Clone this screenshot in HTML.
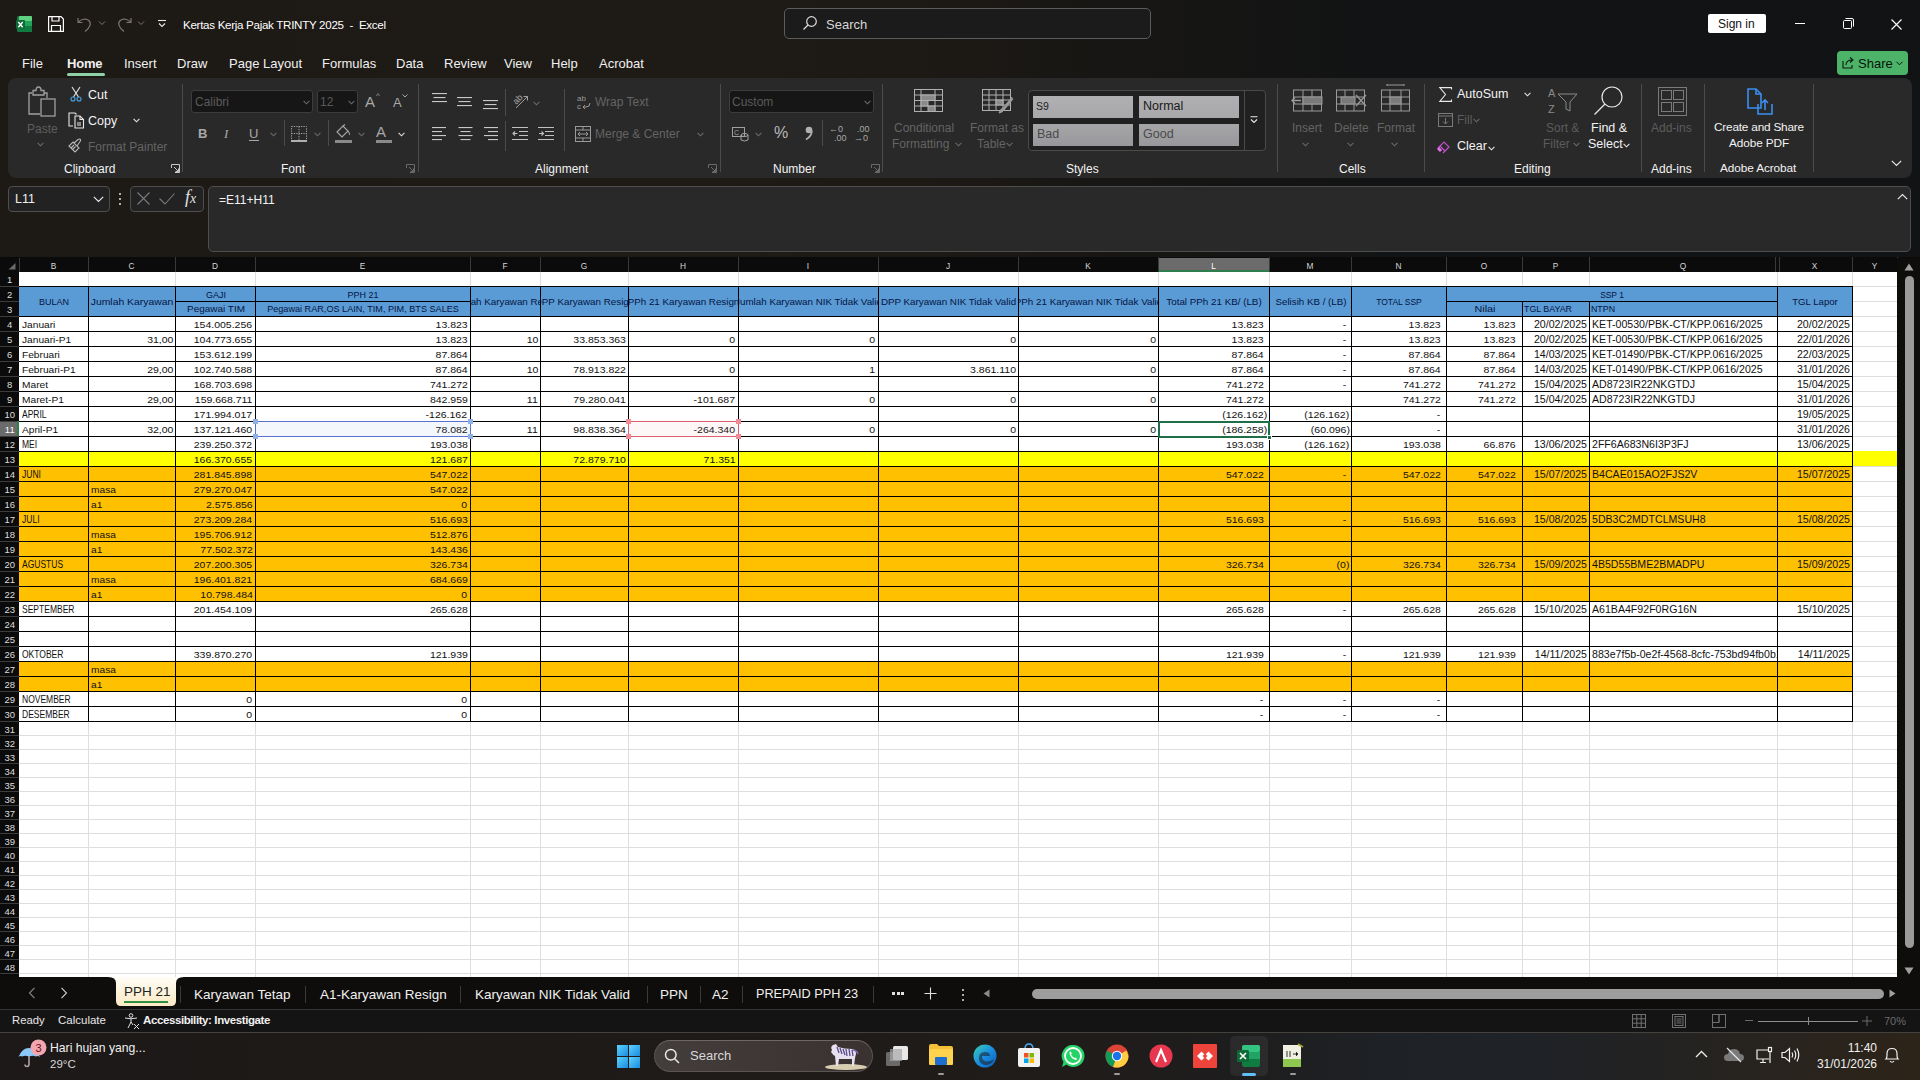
<!DOCTYPE html><html><head><meta charset="utf-8"><title>Excel</title><style>
*{margin:0;padding:0;box-sizing:border-box}
html,body{width:1920px;height:1080px;overflow:hidden;background:#181513;font-family:"Liberation Sans",sans-serif}
div,span,svg{position:absolute}
.t{white-space:nowrap;line-height:1;color:#ffffff;font-size:13px}
.g{color:#8a8a8a}
.lbl{white-space:nowrap;line-height:1;color:#f3f3f3;font-size:12px}
.sep{background:#4a4a4a;width:1px}
svg{overflow:visible}
.c{white-space:nowrap;line-height:1;font-size:10.3px;color:#111;overflow:hidden}
.ch{white-space:nowrap;line-height:1;font-size:8.3px;color:#dcdcdc;text-align:center}
.rh{white-space:nowrap;line-height:1;font-size:9.5px;color:#e6e6e6;text-align:right}
</style></head><body>

<div style="left:0px;top:0px;width:1920px;height:257px;background:linear-gradient(90deg,#1d1915 0%,#1e1a16 35%,#1d1915 48%,#171614 58%,#121314 72%,#111315 100%)"></div>
<svg style="left:16px;top:16px" width="16" height="16" viewBox="0 0 16 16">
<rect x="1" y="0" width="15" height="16" rx="1.5" fill="#1a7a43"/>
<rect x="3" y="0" width="13" height="5" rx="1" fill="#5fd07f"/>
<rect x="3" y="5" width="13" height="5" fill="#21a358"/>
<rect x="3" y="10" width="13" height="6" fill="#107c41"/>
<rect x="0" y="4" width="9" height="9" rx="1" fill="#0e6a37"/>
<path d="M2.3 6 L6.7 11.3 M6.7 6 L2.3 11.3" stroke="#fff" stroke-width="1.4"/>
</svg>
<svg style="left:48px;top:16px" width="16" height="16" viewBox="0 0 16 16" fill="none" stroke="#ffffff" stroke-width="1.2">
<path d="M0.6 0.6 H13 L15.4 3 V15.4 H0.6 Z"/><path d="M4 0.6 V5 H11 V0.6"/><path d="M3.5 15.4 V9.5 H12.5 V15.4"/>
</svg>
<svg style="left:77px;top:16px" width="16" height="16" viewBox="0 0 16 16" fill="none" stroke="#7c7670" stroke-width="1.2">
<path d="M1 2 V6.5 H5.5"/><path d="M1.3 6.3 C3.5 3 9 2 11.8 4.5 C14.5 7 13.5 11.5 8 15.5"/></svg>
<svg style="left:98px;top:20px" width="8" height="6" viewBox="0 0 8 6" fill="none" stroke="#7c7670" stroke-width="1"><path d="M1 1.5 L4 4.5 L7 1.5"/></svg>
<svg style="left:116px;top:16px" width="16" height="16" viewBox="0 0 16 16" fill="none" stroke="#7c7670" stroke-width="1.2">
<path d="M15 2 V6.5 H10.5"/><path d="M14.7 6.3 C12.5 3 7 2 4.2 4.5 C1.5 7 2.5 11.5 8 15.5"/></svg>
<svg style="left:137px;top:20px" width="8" height="6" viewBox="0 0 8 6" fill="none" stroke="#7c7670" stroke-width="1"><path d="M1 1.5 L4 4.5 L7 1.5"/></svg>
<svg style="left:157px;top:19px" width="10" height="10" viewBox="0 0 10 10" fill="none" stroke="#e8e8e8" stroke-width="1.1"><path d="M1 1.5 H9"/><path d="M2 4.5 L5 7.5 L8 4.5"/></svg>
<div class="t" style="left:183px;top:19px;font-size:11.6px;color:#fff;letter-spacing:-0.3px">Kertas Kerja Pajak TRINTY 2025&nbsp; - &nbsp;Excel</div>
<div style="left:784px;top:8px;width:367px;height:31px;background:#1b1b1b;border:1px solid #5c5c5c;border-radius:5px"></div>
<svg style="left:802px;top:15px" width="16" height="16" viewBox="0 0 16 16" fill="none" stroke="#dcdcdc" stroke-width="1.2"><circle cx="9.5" cy="6.5" r="4.8"/><path d="M6 10 L1.5 14.5"/></svg>
<div class="t" style="left:826px;top:18px;font-size:13px;color:#d6d6d6">Search</div>
<div style="left:1708px;top:14px;width:58px;height:19px;background:#fff;border-radius:2px"></div>
<div class="t" style="left:1718px;top:18px;font-size:12px;color:#111">Sign in</div>
<div style="left:1795px;top:23px;width:10px;height:1px;background:#fff"></div>
<svg style="left:1843px;top:18px" width="11" height="11" viewBox="0 0 11 11" fill="none" stroke="#fff" stroke-width="1"><rect x="0.5" y="2.5" width="8" height="8" rx="1"/><path d="M2.5 0.5 H9 Q10.5 0.5 10.5 2 V8.5"/></svg>
<svg style="left:1891px;top:19px" width="11" height="11" viewBox="0 0 11 11" fill="none" stroke="#fff" stroke-width="1.1"><path d="M0.5 0.5 L10.5 10.5 M10.5 0.5 L0.5 10.5"/></svg>
<div class="t" style="left:22px;top:57px;font-size:13px;color:#f0f0f0">File</div>
<div class="t" style="left:67px;top:57px;font-size:13px;color:#f0f0f0;font-weight:bold;letter-spacing:-0.2px">Home</div>
<div class="t" style="left:124px;top:57px;font-size:13px;color:#f0f0f0">Insert</div>
<div class="t" style="left:177px;top:57px;font-size:13px;color:#f0f0f0">Draw</div>
<div class="t" style="left:229px;top:57px;font-size:13px;color:#f0f0f0">Page Layout</div>
<div class="t" style="left:322px;top:57px;font-size:13px;color:#f0f0f0">Formulas</div>
<div class="t" style="left:396px;top:57px;font-size:13px;color:#f0f0f0">Data</div>
<div class="t" style="left:444px;top:57px;font-size:13px;color:#f0f0f0">Review</div>
<div class="t" style="left:504px;top:57px;font-size:13px;color:#f0f0f0">View</div>
<div class="t" style="left:551px;top:57px;font-size:13px;color:#f0f0f0">Help</div>
<div class="t" style="left:599px;top:57px;font-size:13px;color:#f0f0f0">Acrobat</div>
<div style="left:67px;top:73px;width:38px;height:3px;background:#8fd1a6;border-radius:2px"></div>
<div style="left:1837px;top:51px;width:71px;height:24px;background:#4cb368;border-radius:4px"></div>
<svg style="left:1842px;top:56px" width="13" height="13" viewBox="0 0 13 13" fill="none" stroke="#0a1a0e" stroke-width="1.1"><path d="M1 5 V12 H10 V9"/><path d="M4 9 C4 5.5 6.5 4 10 4 M8 1.5 L11 4 L8 6.5"/></svg>
<div class="t" style="left:1858px;top:57px;font-size:13px;color:#06140a">Share</div>
<svg style="left:1896px;top:61px" width="7" height="5" viewBox="0 0 7 5" fill="none" stroke="#06140a" stroke-width="1"><path d="M0.5 0.8 L3.5 3.8 L6.5 0.8"/></svg>
<div style="left:8px;top:78px;width:1904px;height:100px;background:#292929;border-radius:8px"></div>
<svg style="left:28px;top:86px" width="30" height="32" viewBox="0 0 30 32" fill="none" stroke="#a0a0a0" stroke-width="1.3">
<path d="M4 7 H1 V28 H12"/><path d="M16 7 H19 V12"/><path d="M5 4.5 H8 Q8 1 10.5 1 Q13 1 13 4.5 H16 V9 H5 Z"/><rect x="13" y="13" width="14" height="17"/></svg>
<div class="t" style="left:27px;top:123px;font-size:12px;color:#5e5e5e">Paste</div>
<svg style="left:37px;top:142px" width="7" height="5" viewBox="0 0 7 5" fill="none" stroke="#6a6a6a" stroke-width="1.1"><path d="M0.6 0.8 L3.5 3.8 L6.4 0.8"/></svg>
<svg style="left:70px;top:86px" width="12" height="16" viewBox="0 0 12 16" fill="none" stroke-width="1.1">
<path d="M2 1 L8.5 11 M10 1 L3.5 11" stroke="#e8e8e8"/><circle cx="3" cy="13" r="2" stroke="#4aa3e8"/><circle cx="9" cy="13" r="2" stroke="#4aa3e8"/></svg>
<div class="t" style="left:88px;top:89px;font-size:12.5px;color:#f3f3f3">Cut</div>
<svg style="left:68px;top:112px" width="17" height="17" viewBox="0 0 17 17" fill="none" stroke="#e8e8e8" stroke-width="1.1">
<path d="M5 14 H1 V1 H7 L8.5 2.5"/><path d="M7 4 H12 L15.5 7.5 V16 H7 Z"/><path d="M12 4 V7.5 H15.5"/><path d="M9 11 H13 M9 13 H13"/></svg>
<div class="t" style="left:88px;top:115px;font-size:12.5px;color:#f3f3f3">Copy</div>
<svg style="left:133px;top:118px" width="7" height="5" viewBox="0 0 7 5" fill="none" stroke="#e8e8e8" stroke-width="1.1"><path d="M0.6 0.8 L3.5 3.8 L6.4 0.8"/></svg>
<svg style="left:68px;top:138px" width="17" height="16" viewBox="0 0 17 16" fill="none" stroke="#b8b8b8" stroke-width="1.1">
<path d="M1 8 L7 14 L11 10 L5 4 Z"/><path d="M6 5 L10 1.5 Q11.5 0.5 12.5 1.5 Q13 2.5 12 3.5 L9 8"/><path d="M3 10 L6 7 M4.5 11.5 L7.5 8.5"/></svg>
<div class="t" style="left:88px;top:141px;font-size:12px;color:#646464">Format Painter</div>
<div class="t" style="left:64px;top:163px;font-size:12px;color:#f3f3f3">Clipboard</div>
<svg style="left:171px;top:164px" width="9" height="9" viewBox="0 0 9 9" fill="none" stroke="#c8c8c8" stroke-width="1"><path d="M0.5 4 V0.5 H8.5 V8.5 H4"/><path d="M3 3 L7.5 7.5 M7.5 4.5 V7.5 H4.5"/></svg>
<div style="left:182px;top:84px;width:1px;height:88px;background:#4b4b4b"></div>
<div style="left:191px;top:90px;width:122px;height:23px;background:#161616;border:1px solid #3c3c3c;border-radius:3px"></div>
<div class="t" style="left:195px;top:96px;font-size:12px;color:#5a5a5a">Calibri</div>
<svg style="left:303px;top:100px" width="7" height="5" viewBox="0 0 7 5" fill="none" stroke="#6a6a6a" stroke-width="1.1"><path d="M0.6 0.8 L3.5 3.8 L6.4 0.8"/></svg>
<div style="left:317px;top:90px;width:41px;height:23px;background:#161616;border:1px solid #3c3c3c;border-radius:3px"></div>
<div class="t" style="left:320px;top:96px;font-size:12px;color:#5a5a5a">12</div>
<svg style="left:348px;top:100px" width="7" height="5" viewBox="0 0 7 5" fill="none" stroke="#6a6a6a" stroke-width="1.1"><path d="M0.6 0.8 L3.5 3.8 L6.4 0.8"/></svg>
<div class="t" style="left:365px;top:94px;font-size:15px;color:#a8a8a8">A</div>
<div class="t" style="left:376px;top:92px;font-size:8px;color:#a8a8a8">^</div>
<div class="t" style="left:393px;top:96px;font-size:13px;color:#a8a8a8">A</div>
<svg style="left:402px;top:94px" width="6" height="4" viewBox="0 0 6 4" fill="none" stroke="#a8a8a8" stroke-width="1"><path d="M0.5 0.5 L3 3 L5.5 0.5"/></svg>
<div class="t" style="left:198px;top:127px;font-size:13px;color:#a8a8a8;font-weight:bold">B</div>
<div class="t" style="left:224px;top:127px;font-size:13px;color:#a8a8a8;font-style:italic;font-family:&quot;Liberation Serif&quot;,serif">I</div>
<div class="t" style="left:249px;top:127px;font-size:13px;color:#a8a8a8">U</div>
<div style="left:249px;top:140px;width:10px;height:1px;background:#a8a8a8"></div>
<svg style="left:270px;top:132px" width="7" height="5" viewBox="0 0 7 5" fill="none" stroke="#6a6a6a" stroke-width="1.1"><path d="M0.6 0.8 L3.5 3.8 L6.4 0.8"/></svg>
<div style="left:284px;top:120px;width:1px;height:26px;background:#4b4b4b"></div>
<svg style="left:291px;top:126px" width="16" height="16" viewBox="0 0 16 16" fill="none" stroke="#a8a8a8" stroke-width="1" stroke-dasharray="1.2 1.2">
<rect x="0.5" y="0.5" width="15" height="14"/><path d="M8 0.5 V14.5 M0.5 7.5 H15.5"/></svg>
<div style="left:291px;top:140px;width:16px;height:1.5px;background:#b0b0b0"></div>
<svg style="left:314px;top:132px" width="7" height="5" viewBox="0 0 7 5" fill="none" stroke="#6a6a6a" stroke-width="1.1"><path d="M0.6 0.8 L3.5 3.8 L6.4 0.8"/></svg>
<div style="left:328px;top:120px;width:1px;height:26px;background:#4b4b4b"></div>
<svg style="left:335px;top:124px" width="17" height="18" viewBox="0 0 17 18" fill="none" stroke="#a8a8a8" stroke-width="1.1">
<path d="M2 8 L8 2 L13 7 L7 13 Z"/><path d="M8 2 L10 0.5 M13 7 Q15 9.5 14.5 11"/></svg>
<div style="left:335px;top:140px;width:17px;height:3px;background:#8a8a8a"></div>
<svg style="left:358px;top:132px" width="7" height="5" viewBox="0 0 7 5" fill="none" stroke="#6a6a6a" stroke-width="1.1"><path d="M0.6 0.8 L3.5 3.8 L6.4 0.8"/></svg>
<div class="t" style="left:376px;top:124px;font-size:15px;color:#a8a8a8">A</div>
<div style="left:376px;top:140px;width:16px;height:3px;background:#8a8a8a"></div>
<svg style="left:398px;top:132px" width="7" height="5" viewBox="0 0 7 5" fill="none" stroke="#e0e0e0" stroke-width="1.1"><path d="M0.6 0.8 L3.5 3.8 L6.4 0.8"/></svg>
<div class="t" style="left:281px;top:163px;font-size:12px;color:#f3f3f3">Font</div>
<svg style="left:406px;top:164px" width="9" height="9" viewBox="0 0 9 9" fill="none" stroke="#6a6a6a" stroke-width="1"><path d="M0.5 4 V0.5 H8.5 V8.5 H4"/><path d="M3 3 L7.5 7.5 M7.5 4.5 V7.5 H4.5"/></svg>
<div style="left:418px;top:84px;width:1px;height:88px;background:#4b4b4b"></div>
<svg style="left:432px;top:93px" width="15" height="12" viewBox="0 0 15 12"><rect x="0.0" y="0" width="15" height="1.1" fill="#c8c8c8"/><rect x="1.5" y="4" width="12" height="1.1" fill="#c8c8c8"/><rect x="0.0" y="8" width="15" height="1.1" fill="#c8c8c8"/></svg>
<svg style="left:457px;top:97px" width="15" height="12" viewBox="0 0 15 12"><rect x="0.0" y="0" width="15" height="1.1" fill="#c8c8c8"/><rect x="1.5" y="4" width="12" height="1.1" fill="#c8c8c8"/><rect x="0.0" y="8" width="15" height="1.1" fill="#c8c8c8"/></svg>
<svg style="left:483px;top:100px" width="15" height="12" viewBox="0 0 15 12"><rect x="0.0" y="0" width="15" height="1.1" fill="#c8c8c8"/><rect x="1.5" y="4" width="12" height="1.1" fill="#c8c8c8"/><rect x="0.0" y="8" width="15" height="1.1" fill="#c8c8c8"/></svg>
<svg style="left:432px;top:127px" width="15" height="16" viewBox="0 0 15 16"><rect x="0" y="0" width="14" height="1.1" fill="#c8c8c8"/><rect x="0" y="4" width="10" height="1.1" fill="#c8c8c8"/><rect x="0" y="8" width="14" height="1.1" fill="#c8c8c8"/><rect x="0" y="12" width="10" height="1.1" fill="#c8c8c8"/></svg>
<svg style="left:458px;top:127px" width="15" height="16" viewBox="0 0 15 16"><rect x="0.5" y="0" width="14" height="1.1" fill="#c8c8c8"/><rect x="2.5" y="4" width="10" height="1.1" fill="#c8c8c8"/><rect x="0.5" y="8" width="14" height="1.1" fill="#c8c8c8"/><rect x="2.5" y="12" width="10" height="1.1" fill="#c8c8c8"/></svg>
<svg style="left:483px;top:127px" width="15" height="16" viewBox="0 0 15 16"><rect x="1" y="0" width="14" height="1.1" fill="#c8c8c8"/><rect x="5" y="4" width="10" height="1.1" fill="#c8c8c8"/><rect x="1" y="8" width="14" height="1.1" fill="#c8c8c8"/><rect x="5" y="12" width="10" height="1.1" fill="#c8c8c8"/></svg>
<div style="left:505px;top:89px;width:1px;height:27px;background:#4b4b4b"></div>
<div style="left:505px;top:121px;width:1px;height:30px;background:#4b4b4b"></div>
<svg style="left:512px;top:92px" width="17" height="18" viewBox="0 0 17 18" fill="none" stroke="#a0a0a0" stroke-width="1"><path d="M4 16 L15.5 4.5 M11.5 4.5 H15.5 V8.5"/><g transform="rotate(-45 6 7)"><text x="0.5" y="10" font-size="9" fill="#a8a8a8" stroke="none" font-family="Liberation Sans">ab</text></g></svg>
<svg style="left:533px;top:101px" width="7" height="5" viewBox="0 0 7 5" fill="none" stroke="#6a6a6a" stroke-width="1.1"><path d="M0.6 0.8 L3.5 3.8 L6.4 0.8"/></svg>
<svg style="left:512px;top:127px" width="16" height="14" viewBox="0 0 16 14" fill="none" stroke="#c0c0c0" stroke-width="1.1"><path d="M0 0.5 H16 M7 4.5 H16 M7 8.5 H16 M0 12.5 H16 M5.5 6.5 H1 M3 4.5 L1 6.5 L3 8.5"/></svg>
<svg style="left:538px;top:127px" width="16" height="14" viewBox="0 0 16 14" fill="none" stroke="#c0c0c0" stroke-width="1.1"><path d="M0 0.5 H16 M7 4.5 H16 M7 8.5 H16 M0 12.5 H16 M1 6.5 H5.5 M3.5 4.5 L5.5 6.5 L3.5 8.5"/></svg>
<div style="left:564px;top:89px;width:1px;height:62px;background:#4b4b4b"></div>
<svg style="left:577px;top:94px" width="15" height="17" viewBox="0 0 15 17" fill="none" stroke="#9a9a9a" stroke-width="1"><text x="0" y="7" font-size="8" fill="#9a9a9a" stroke="none" font-family="Liberation Sans">ab</text><text x="0" y="15" font-size="8" fill="#9a9a9a" stroke="none" font-family="Liberation Sans">c</text><path d="M13 9 Q13 13 9 13 H6 M8 11 L6 13 L8 15"/></svg>
<div class="t" style="left:595px;top:96px;font-size:12px;color:#646464">Wrap Text</div>
<svg style="left:575px;top:126px" width="16" height="16" viewBox="0 0 16 16" fill="none" stroke="#9a9a9a" stroke-width="1"><rect x="0.5" y="0.5" width="15" height="15"/><path d="M0.5 4 H15.5 M0.5 12 H15.5 M8 0.5 V4 M8 12 V15.5 M3 8 H13 M5 6 L3 8 L5 10 M11 6 L13 8 L11 10"/></svg>
<div class="t" style="left:595px;top:128px;font-size:12px;color:#646464">Merge &amp; Center</div>
<svg style="left:697px;top:132px" width="7" height="5" viewBox="0 0 7 5" fill="none" stroke="#6a6a6a" stroke-width="1.1"><path d="M0.6 0.8 L3.5 3.8 L6.4 0.8"/></svg>
<div class="t" style="left:535px;top:163px;font-size:12px;color:#f3f3f3">Alignment</div>
<svg style="left:708px;top:164px" width="9" height="9" viewBox="0 0 9 9" fill="none" stroke="#6a6a6a" stroke-width="1"><path d="M0.5 4 V0.5 H8.5 V8.5 H4"/><path d="M3 3 L7.5 7.5 M7.5 4.5 V7.5 H4.5"/></svg>
<div style="left:720px;top:84px;width:1px;height:88px;background:#4b4b4b"></div>
<div style="left:729px;top:90px;width:145px;height:23px;background:#161616;border:1px solid #3c3c3c;border-radius:3px"></div>
<div class="t" style="left:732px;top:96px;font-size:12px;color:#5a5a5a">Custom</div>
<svg style="left:864px;top:100px" width="7" height="5" viewBox="0 0 7 5" fill="none" stroke="#6a6a6a" stroke-width="1.1"><path d="M0.6 0.8 L3.5 3.8 L6.4 0.8"/></svg>
<svg style="left:732px;top:127px" width="17" height="15" viewBox="0 0 17 15" fill="none" stroke="#a0a0a0" stroke-width="1"><rect x="0.5" y="0.5" width="12" height="9"/><text x="2" y="8" font-size="7" fill="#a0a0a0" stroke="none" font-family="Liberation Sans">C</text><ellipse cx="12.5" cy="8" rx="3.5" ry="1.5"/><path d="M9 8 V13 Q12.5 15 16 13 V8"/></svg>
<svg style="left:755px;top:132px" width="7" height="5" viewBox="0 0 7 5" fill="none" stroke="#6a6a6a" stroke-width="1.1"><path d="M0.6 0.8 L3.5 3.8 L6.4 0.8"/></svg>
<div class="t" style="left:774px;top:125px;font-size:16px;color:#b8b8b8">%</div>
<svg style="left:804px;top:126px" width="9" height="14" viewBox="0 0 9 14"><circle cx="5" cy="4" r="3.3" fill="#b0b0b0"/><path d="M7.8 4.5 Q8 10 2 13.5" fill="none" stroke="#b0b0b0" stroke-width="1.8"/></svg>
<div style="left:822px;top:120px;width:1px;height:26px;background:#4b4b4b"></div>
<div class="t" style="left:829px;top:125px;font-size:9px;color:#a8a8a8">&#8592;0</div>
<div class="t" style="left:834px;top:134px;font-size:9px;color:#a8a8a8">.00</div>
<div class="t" style="left:857px;top:125px;font-size:9px;color:#a8a8a8">.00</div>
<div class="t" style="left:854px;top:134px;font-size:9px;color:#a8a8a8">&#8594;0</div>
<div class="t" style="left:773px;top:163px;font-size:12px;color:#f3f3f3">Number</div>
<svg style="left:871px;top:164px" width="9" height="9" viewBox="0 0 9 9" fill="none" stroke="#6a6a6a" stroke-width="1"><path d="M0.5 4 V0.5 H8.5 V8.5 H4"/><path d="M3 3 L7.5 7.5 M7.5 4.5 V7.5 H4.5"/></svg>
<div style="left:882px;top:84px;width:1px;height:88px;background:#4b4b4b"></div>
<svg style="left:914px;top:89px" width="29" height="23" viewBox="0 0 29 23" fill="none" stroke="#b0b0b0" stroke-width="1"><rect x="0.5" y="0.5" width="28" height="22"/><path d="M7 0.5 V22.5 M21 0.5 V22.5 M0.5 6 H28.5 M0.5 11.5 H28.5 M0.5 17 H28.5"/><rect x="7" y="6" width="14" height="5.5" fill="#8a8a8a"/><rect x="7" y="11.5" width="7" height="5.5" fill="#8a8a8a"/><rect x="14" y="17" width="7" height="5.5" fill="#8a8a8a"/></svg>
<div class="t" style="left:894px;top:122px;font-size:12px;color:#646464">Conditional</div>
<div class="t" style="left:892px;top:138px;font-size:12px;color:#646464">Formatting</div>
<svg style="left:955px;top:142px" width="7" height="5" viewBox="0 0 7 5" fill="none" stroke="#6a6a6a" stroke-width="1.1"><path d="M0.6 0.8 L3.5 3.8 L6.4 0.8"/></svg>
<svg style="left:982px;top:89px" width="32" height="27" viewBox="0 0 32 27" fill="none" stroke="#b0b0b0" stroke-width="1"><rect x="0.5" y="0.5" width="28" height="21"/><path d="M7 0.5 V21.5 M14 0.5 V21.5 M21 0.5 V21.5 M0.5 6 H28.5 M0.5 11 H28.5 M0.5 16 H28.5"/><rect x="14" y="11" width="7" height="5" fill="#8a8a8a"/><path d="M30 8 L21 19 Q18 20 17 24 Q20 24 22 21 L31 10" fill="#9a9a9a" stroke="#9a9a9a"/></svg>
<div class="t" style="left:970px;top:122px;font-size:12px;color:#646464">Format as</div>
<div class="t" style="left:977px;top:138px;font-size:12px;color:#646464">Table</div>
<svg style="left:1006px;top:142px" width="7" height="5" viewBox="0 0 7 5" fill="none" stroke="#6a6a6a" stroke-width="1.1"><path d="M0.6 0.8 L3.5 3.8 L6.4 0.8"/></svg>
<div style="left:1028px;top:90px;width:238px;height:61px;background:#202020;border:1px solid #4a4a4a;border-radius:4px"></div>
<div style="left:1033px;top:96px;width:100px;height:22px;background:linear-gradient(#b0b0b2,#a8a8aa)"></div>
<div class="t" style="left:1036px;top:101px;font-size:10.5px;color:#1e1e1e">S9</div>
<div style="left:1139px;top:96px;width:100px;height:22px;background:linear-gradient(#b0b0b2,#a8a8aa)"></div>
<div class="t" style="left:1143px;top:100px;font-size:12.5px;color:#1a1a1a">Normal</div>
<div style="left:1033px;top:124px;width:100px;height:22px;background:linear-gradient(#a6a6a8,#98989c)"></div>
<div class="t" style="left:1037px;top:128px;font-size:12.5px;color:#4a4a4a">Bad</div>
<div style="left:1139px;top:124px;width:100px;height:22px;background:linear-gradient(#a6a6a8,#98989c)"></div>
<div class="t" style="left:1143px;top:128px;font-size:12.5px;color:#4a4a4a">Good</div>
<div style="left:1244px;top:91px;width:1px;height:59px;background:#4a4a4a"></div>
<svg style="left:1250px;top:116px" width="8" height="8" viewBox="0 0 8 8" fill="none" stroke="#e8e8e8" stroke-width="1.1"><path d="M0.5 0.8 H7.5 M1 3.5 L4 6.5 L7 3.5"/></svg>
<div class="t" style="left:1066px;top:163px;font-size:12px;color:#f3f3f3">Styles</div>
<div style="left:1277px;top:84px;width:1px;height:88px;background:#4b4b4b"></div>
<svg style="left:1291px;top:89px" width="32" height="23" viewBox="0 0 32 23" fill="none" stroke="#9a9a9a" stroke-width="1"><rect x="2.5" y="1" width="28" height="21"/><path d="M2.5 8 H30.5 M2.5 15 H30.5 M12 1 V22 M21 1 V22"/><rect x="12" y="8" width="19" height="7" fill="#7a7a7a"/><path d="M10 11.5 H1 M4 8.5 L1 11.5 L4 14.5" stroke-width="1.3"/></svg>
<div class="t" style="left:1292px;top:122px;font-size:12px;color:#646464">Insert</div>
<svg style="left:1302px;top:142px" width="7" height="5" viewBox="0 0 7 5" fill="none" stroke="#6a6a6a" stroke-width="1.1"><path d="M0.6 0.8 L3.5 3.8 L6.4 0.8"/></svg>
<svg style="left:1336px;top:89px" width="31" height="23" viewBox="0 0 31 23" fill="none" stroke="#9a9a9a" stroke-width="1"><rect x="0.5" y="1" width="28" height="21"/><path d="M0.5 8 H28.5 M0.5 15 H28.5 M9 1 V22 M18 1 V22"/><rect x="5" y="8" width="14" height="7" fill="#7a7a7a"/><path d="M20 6 L30 17 M30 6 L20 17" stroke-width="1.3"/></svg>
<div class="t" style="left:1334px;top:122px;font-size:12px;color:#646464">Delete</div>
<svg style="left:1347px;top:142px" width="7" height="5" viewBox="0 0 7 5" fill="none" stroke="#6a6a6a" stroke-width="1.1"><path d="M0.6 0.8 L3.5 3.8 L6.4 0.8"/></svg>
<svg style="left:1381px;top:84px" width="29" height="28" viewBox="0 0 29 28" fill="none" stroke="#9a9a9a" stroke-width="1"><path d="M6 1 H23 M6 0 V2 M23 0 V2"/><rect x="0.5" y="6" width="28" height="21"/><path d="M0.5 13 H28.5 M0.5 20 H28.5 M9 6 V27 M20 6 V27"/><rect x="9" y="13" width="11" height="7" fill="#7a7a7a"/></svg>
<div class="t" style="left:1377px;top:122px;font-size:12px;color:#646464">Format</div>
<svg style="left:1391px;top:142px" width="7" height="5" viewBox="0 0 7 5" fill="none" stroke="#6a6a6a" stroke-width="1.1"><path d="M0.6 0.8 L3.5 3.8 L6.4 0.8"/></svg>
<div class="t" style="left:1339px;top:163px;font-size:12px;color:#f3f3f3">Cells</div>
<div style="left:1424px;top:84px;width:1px;height:88px;background:#4b4b4b"></div>
<svg style="left:1439px;top:87px" width="13" height="15" viewBox="0 0 13 15" fill="none" stroke="#e8e8e8" stroke-width="1.1"><path d="M12.5 2.5 V0.6 H0.8 L6.5 7.5 L0.8 14.4 H12.5 V12.5"/></svg>
<div class="t" style="left:1457px;top:88px;font-size:12.5px;color:#f3f3f3">AutoSum</div>
<svg style="left:1524px;top:92px" width="7" height="5" viewBox="0 0 7 5" fill="none" stroke="#e8e8e8" stroke-width="1.1"><path d="M0.6 0.8 L3.5 3.8 L6.4 0.8"/></svg>
<svg style="left:1438px;top:113px" width="15" height="14" viewBox="0 0 15 14" fill="none" stroke="#7a7a7a" stroke-width="1"><rect x="0.5" y="0.5" width="14" height="13"/><path d="M0.5 3 H14.5 M7.5 5 V11 M5 8.5 L7.5 11 L10 8.5"/></svg>
<div class="t" style="left:1457px;top:114px;font-size:12px;color:#5c5c5c">Fill</div>
<svg style="left:1473px;top:118px" width="7" height="5" viewBox="0 0 7 5" fill="none" stroke="#6a6a6a" stroke-width="1.1"><path d="M0.6 0.8 L3.5 3.8 L6.4 0.8"/></svg>
<svg style="left:1437px;top:139px" width="15" height="14" viewBox="0 0 15 14" fill="none" stroke-width="1.2"><path d="M1 9 L7 3 L12 8 L6 14" stroke="#c050c8"/><path d="M3 7 L8 12" stroke="#c050c8"/><path d="M1 9 L4 12" stroke="#e070e8" stroke-width="3"/></svg>
<div class="t" style="left:1457px;top:140px;font-size:12.5px;color:#f3f3f3">Clear</div>
<svg style="left:1488px;top:146px" width="7" height="5" viewBox="0 0 7 5" fill="none" stroke="#e8e8e8" stroke-width="1.1"><path d="M0.6 0.8 L3.5 3.8 L6.4 0.8"/></svg>
<svg style="left:1548px;top:87px" width="32" height="28" viewBox="0 0 32 28" fill="none" stroke="#8a8a8a" stroke-width="1"><text x="0" y="10" font-size="11" fill="#8a8a8a" stroke="none" font-family="Liberation Sans">A</text><text x="0" y="26" font-size="11" fill="#8a8a8a" stroke="none" font-family="Liberation Sans">Z</text><path d="M10 7 H29 L22 15 V24 L18 22 V15 Z"/></svg>
<div class="t" style="left:1546px;top:122px;font-size:12px;color:#5c5c5c">Sort &amp;</div>
<div class="t" style="left:1543px;top:138px;font-size:12px;color:#5c5c5c">Filter</div>
<svg style="left:1573px;top:142px" width="7" height="5" viewBox="0 0 7 5" fill="none" stroke="#6a6a6a" stroke-width="1.1"><path d="M0.6 0.8 L3.5 3.8 L6.4 0.8"/></svg>
<svg style="left:1593px;top:86px" width="31" height="30" viewBox="0 0 31 30" fill="none" stroke="#e8e8e8" stroke-width="1.2"><circle cx="19" cy="11" r="10"/><path d="M12 18 L1.5 28.5"/></svg>
<div class="t" style="left:1591px;top:122px;font-size:12.5px;color:#f3f3f3">Find &amp;</div>
<div class="t" style="left:1588px;top:138px;font-size:12.5px;color:#f3f3f3">Select</div>
<svg style="left:1623px;top:143px" width="7" height="5" viewBox="0 0 7 5" fill="none" stroke="#e8e8e8" stroke-width="1.1"><path d="M0.6 0.8 L3.5 3.8 L6.4 0.8"/></svg>
<div class="t" style="left:1514px;top:163px;font-size:12px;color:#f3f3f3">Editing</div>
<div style="left:1641px;top:84px;width:1px;height:88px;background:#4b4b4b"></div>
<svg style="left:1658px;top:87px" width="29" height="29" viewBox="0 0 29 29" fill="none" stroke="#7a7a7a" stroke-width="1"><rect x="0.5" y="0.5" width="28" height="28"/><rect x="3.5" y="3.5" width="10" height="9"/><rect x="15.5" y="3.5" width="10" height="9"/><rect x="3.5" y="15.5" width="10" height="9"/><rect x="15.5" y="15.5" width="10" height="9"/></svg>
<div class="t" style="left:1651px;top:122px;font-size:12px;color:#5c5c5c">Add-ins</div>
<div class="t" style="left:1651px;top:163px;font-size:12px;color:#f3f3f3">Add-ins</div>
<div style="left:1704px;top:84px;width:1px;height:88px;background:#4b4b4b"></div>
<svg style="left:1747px;top:88px" width="28" height="28" viewBox="0 0 28 28" fill="none" stroke="#3a8ef0" stroke-width="1.6"><path d="M1 1 H9 L14 6 V20 H1 Z"/><path d="M9 1 V6 H14"/><path d="M11 16 V26 H25 V16 M18 22 V12 M15 15 L18 12 L21 15"/></svg>
<div class="t" style="left:1714px;top:122px;font-size:11.8px;color:#f3f3f3;letter-spacing:-0.2px">Create and Share</div>
<div class="t" style="left:1729px;top:138px;font-size:11.8px;color:#f3f3f3;letter-spacing:-0.1px">Adobe PDF</div>
<div class="t" style="left:1720px;top:163px;font-size:11.8px;color:#f3f3f3;letter-spacing:-0.1px">Adobe Acrobat</div>
<div style="left:1813px;top:84px;width:1px;height:88px;background:#4b4b4b"></div>
<svg style="left:1891px;top:160px" width="11" height="7" viewBox="0 0 11 7" fill="none" stroke="#e8e8e8" stroke-width="1.2"><path d="M0.8 0.8 L5.5 5.5 L10.2 0.8"/></svg>
<div style="left:8px;top:186px;width:102px;height:26px;background:#222;border:1px solid #4e4e4e;border-radius:4px"></div>
<div class="t" style="left:15px;top:193px;font-size:12.5px;color:#f0f0f0">L11</div>
<svg style="left:93px;top:196px" width="11" height="7" viewBox="0 0 11 7" fill="none" stroke="#e8e8e8" stroke-width="1.2"><path d="M0.8 0.8 L5.5 5.5 L10.2 0.8"/></svg>
<div style="left:119px;top:193px;width:2px;height:2px;background:#e0e0e0;border-radius:1px"></div>
<div style="left:119px;top:198px;width:2px;height:2px;background:#e0e0e0;border-radius:1px"></div>
<div style="left:119px;top:203px;width:2px;height:2px;background:#e0e0e0;border-radius:1px"></div>
<div style="left:130px;top:186px;width:74px;height:26px;background:#222;border:1px solid #4e4e4e;border-radius:4px"></div>
<svg style="left:137px;top:192px" width="13" height="13" viewBox="0 0 13 13" fill="none" stroke="#7a7a7a" stroke-width="1.1"><path d="M0.5 0.5 L12.5 12.5 M12.5 0.5 L0.5 12.5"/></svg>
<svg style="left:159px;top:193px" width="16" height="12" viewBox="0 0 16 12" fill="none" stroke="#7a7a7a" stroke-width="1.1"><path d="M0.5 5.5 L6 11 L15.5 0.5"/></svg>
<div class="t" style="left:185px;top:188px;font-size:18px;color:#e0e0e0;font-family:&quot;Liberation Serif&quot;,serif"><i>f</i><span style="position:static;font-style:italic;font-size:14px">x</span></div>
<div style="left:208px;top:186px;width:1703px;height:66px;background:#292929;border:1px solid #4e4e4e;border-radius:5px"></div>
<div class="t" style="left:219px;top:194px;font-size:12px;color:#f3f3f3">=E11+H11</div>
<svg style="left:1897px;top:193px" width="11" height="7" viewBox="0 0 11 7" fill="none" stroke="#e8e8e8" stroke-width="1.2"><path d="M0.8 6.2 L5.5 1.5 L10.2 6.2"/></svg>
<div style="left:0px;top:257px;width:1920px;height:720px;background:#0c0b0a"></div>
<div style="left:19px;top:272px;width:1878px;height:705px;background:#ffffff"></div>
<div style="left:88px;top:272px;width:1px;height:705px;background:#dedede"></div>
<div style="left:175px;top:272px;width:1px;height:705px;background:#dedede"></div>
<div style="left:255px;top:272px;width:1px;height:705px;background:#dedede"></div>
<div style="left:470px;top:272px;width:1px;height:705px;background:#dedede"></div>
<div style="left:540px;top:272px;width:1px;height:705px;background:#dedede"></div>
<div style="left:628px;top:272px;width:1px;height:705px;background:#dedede"></div>
<div style="left:738px;top:272px;width:1px;height:705px;background:#dedede"></div>
<div style="left:878px;top:272px;width:1px;height:705px;background:#dedede"></div>
<div style="left:1018px;top:272px;width:1px;height:705px;background:#dedede"></div>
<div style="left:1158px;top:272px;width:1px;height:705px;background:#dedede"></div>
<div style="left:1269px;top:272px;width:1px;height:705px;background:#dedede"></div>
<div style="left:1351px;top:272px;width:1px;height:705px;background:#dedede"></div>
<div style="left:1446px;top:272px;width:1px;height:705px;background:#dedede"></div>
<div style="left:1522px;top:272px;width:1px;height:705px;background:#dedede"></div>
<div style="left:1589px;top:272px;width:1px;height:705px;background:#dedede"></div>
<div style="left:1777px;top:272px;width:1px;height:705px;background:#dedede"></div>
<div style="left:1852px;top:272px;width:1px;height:705px;background:#dedede"></div>
<div style="left:1897px;top:272px;width:1px;height:705px;background:#dedede"></div>
<div style="left:19px;top:286px;width:1878px;height:1px;background:#dedede"></div>
<div style="left:19px;top:301px;width:1878px;height:1px;background:#dedede"></div>
<div style="left:19px;top:316px;width:1878px;height:1px;background:#dedede"></div>
<div style="left:19px;top:331px;width:1878px;height:1px;background:#dedede"></div>
<div style="left:19px;top:346px;width:1878px;height:1px;background:#dedede"></div>
<div style="left:19px;top:361px;width:1878px;height:1px;background:#dedede"></div>
<div style="left:19px;top:376px;width:1878px;height:1px;background:#dedede"></div>
<div style="left:19px;top:391px;width:1878px;height:1px;background:#dedede"></div>
<div style="left:19px;top:406px;width:1878px;height:1px;background:#dedede"></div>
<div style="left:19px;top:421px;width:1878px;height:1px;background:#dedede"></div>
<div style="left:19px;top:436px;width:1878px;height:1px;background:#dedede"></div>
<div style="left:19px;top:451px;width:1878px;height:1px;background:#dedede"></div>
<div style="left:19px;top:466px;width:1878px;height:1px;background:#dedede"></div>
<div style="left:19px;top:481px;width:1878px;height:1px;background:#dedede"></div>
<div style="left:19px;top:496px;width:1878px;height:1px;background:#dedede"></div>
<div style="left:19px;top:511px;width:1878px;height:1px;background:#dedede"></div>
<div style="left:19px;top:526px;width:1878px;height:1px;background:#dedede"></div>
<div style="left:19px;top:541px;width:1878px;height:1px;background:#dedede"></div>
<div style="left:19px;top:556px;width:1878px;height:1px;background:#dedede"></div>
<div style="left:19px;top:571px;width:1878px;height:1px;background:#dedede"></div>
<div style="left:19px;top:586px;width:1878px;height:1px;background:#dedede"></div>
<div style="left:19px;top:601px;width:1878px;height:1px;background:#dedede"></div>
<div style="left:19px;top:616px;width:1878px;height:1px;background:#dedede"></div>
<div style="left:19px;top:631px;width:1878px;height:1px;background:#dedede"></div>
<div style="left:19px;top:646px;width:1878px;height:1px;background:#dedede"></div>
<div style="left:19px;top:661px;width:1878px;height:1px;background:#dedede"></div>
<div style="left:19px;top:676px;width:1878px;height:1px;background:#dedede"></div>
<div style="left:19px;top:691px;width:1878px;height:1px;background:#dedede"></div>
<div style="left:19px;top:706px;width:1878px;height:1px;background:#dedede"></div>
<div style="left:19px;top:721px;width:1878px;height:1px;background:#dedede"></div>
<div style="left:19px;top:735px;width:1878px;height:1px;background:#dedede"></div>
<div style="left:19px;top:749px;width:1878px;height:1px;background:#dedede"></div>
<div style="left:19px;top:763px;width:1878px;height:1px;background:#dedede"></div>
<div style="left:19px;top:777px;width:1878px;height:1px;background:#dedede"></div>
<div style="left:19px;top:791px;width:1878px;height:1px;background:#dedede"></div>
<div style="left:19px;top:805px;width:1878px;height:1px;background:#dedede"></div>
<div style="left:19px;top:819px;width:1878px;height:1px;background:#dedede"></div>
<div style="left:19px;top:833px;width:1878px;height:1px;background:#dedede"></div>
<div style="left:19px;top:847px;width:1878px;height:1px;background:#dedede"></div>
<div style="left:19px;top:861px;width:1878px;height:1px;background:#dedede"></div>
<div style="left:19px;top:875px;width:1878px;height:1px;background:#dedede"></div>
<div style="left:19px;top:889px;width:1878px;height:1px;background:#dedede"></div>
<div style="left:19px;top:903px;width:1878px;height:1px;background:#dedede"></div>
<div style="left:19px;top:917px;width:1878px;height:1px;background:#dedede"></div>
<div style="left:19px;top:931px;width:1878px;height:1px;background:#dedede"></div>
<div style="left:19px;top:945px;width:1878px;height:1px;background:#dedede"></div>
<div style="left:19px;top:959px;width:1878px;height:1px;background:#dedede"></div>
<div style="left:19px;top:973px;width:1878px;height:1px;background:#dedede"></div>
<div style="left:19px;top:286px;width:1833px;height:30px;background:#5b9bd5"></div>
<div style="left:19px;top:451px;width:1878px;height:15px;background:#ffff00"></div>
<div style="left:19px;top:466px;width:1833px;height:15px;background:#ffc000"></div>
<div style="left:19px;top:481px;width:1833px;height:15px;background:#ffc000"></div>
<div style="left:19px;top:496px;width:1833px;height:15px;background:#ffc000"></div>
<div style="left:19px;top:511px;width:1833px;height:15px;background:#ffc000"></div>
<div style="left:19px;top:526px;width:1833px;height:15px;background:#ffc000"></div>
<div style="left:19px;top:541px;width:1833px;height:15px;background:#ffc000"></div>
<div style="left:19px;top:556px;width:1833px;height:15px;background:#ffc000"></div>
<div style="left:19px;top:571px;width:1833px;height:15px;background:#ffc000"></div>
<div style="left:19px;top:586px;width:1833px;height:15px;background:#ffc000"></div>
<div style="left:19px;top:661px;width:1833px;height:15px;background:#ffc000"></div>
<div style="left:19px;top:676px;width:1833px;height:15px;background:#ffc000"></div>
<div style="left:19px;top:286px;width:1834px;height:1px;background:#000"></div>
<div style="left:175px;top:301px;width:81px;height:1px;background:#000"></div>
<div style="left:255px;top:301px;width:216px;height:1px;background:#000"></div>
<div style="left:1446px;top:301px;width:332px;height:1px;background:#000"></div>
<div style="left:19px;top:316px;width:1834px;height:1px;background:#000"></div>
<div style="left:19px;top:331px;width:1834px;height:1px;background:#000"></div>
<div style="left:19px;top:346px;width:1834px;height:1px;background:#000"></div>
<div style="left:19px;top:361px;width:1834px;height:1px;background:#000"></div>
<div style="left:19px;top:376px;width:1834px;height:1px;background:#000"></div>
<div style="left:19px;top:391px;width:1834px;height:1px;background:#000"></div>
<div style="left:19px;top:406px;width:1834px;height:1px;background:#000"></div>
<div style="left:19px;top:421px;width:1834px;height:1px;background:#000"></div>
<div style="left:19px;top:436px;width:1834px;height:1px;background:#000"></div>
<div style="left:19px;top:451px;width:1834px;height:1px;background:#000"></div>
<div style="left:19px;top:466px;width:1834px;height:1px;background:#000"></div>
<div style="left:19px;top:481px;width:1834px;height:1px;background:#000"></div>
<div style="left:19px;top:496px;width:1834px;height:1px;background:#000"></div>
<div style="left:19px;top:511px;width:1834px;height:1px;background:#000"></div>
<div style="left:19px;top:526px;width:1834px;height:1px;background:#000"></div>
<div style="left:19px;top:541px;width:1834px;height:1px;background:#000"></div>
<div style="left:19px;top:556px;width:1834px;height:1px;background:#000"></div>
<div style="left:19px;top:571px;width:1834px;height:1px;background:#000"></div>
<div style="left:19px;top:586px;width:1834px;height:1px;background:#000"></div>
<div style="left:19px;top:601px;width:1834px;height:1px;background:#000"></div>
<div style="left:19px;top:616px;width:1834px;height:1px;background:#000"></div>
<div style="left:19px;top:631px;width:1834px;height:1px;background:#000"></div>
<div style="left:19px;top:646px;width:1834px;height:1px;background:#000"></div>
<div style="left:19px;top:661px;width:1834px;height:1px;background:#000"></div>
<div style="left:19px;top:676px;width:1834px;height:1px;background:#000"></div>
<div style="left:19px;top:691px;width:1834px;height:1px;background:#000"></div>
<div style="left:19px;top:706px;width:1834px;height:1px;background:#000"></div>
<div style="left:19px;top:721px;width:1834px;height:1px;background:#000"></div>
<div style="left:88px;top:286px;width:1px;height:436px;background:#000"></div>
<div style="left:175px;top:286px;width:1px;height:436px;background:#000"></div>
<div style="left:255px;top:286px;width:1px;height:436px;background:#000"></div>
<div style="left:470px;top:286px;width:1px;height:436px;background:#000"></div>
<div style="left:540px;top:286px;width:1px;height:436px;background:#000"></div>
<div style="left:628px;top:286px;width:1px;height:436px;background:#000"></div>
<div style="left:738px;top:286px;width:1px;height:436px;background:#000"></div>
<div style="left:878px;top:286px;width:1px;height:436px;background:#000"></div>
<div style="left:1018px;top:286px;width:1px;height:436px;background:#000"></div>
<div style="left:1158px;top:286px;width:1px;height:436px;background:#000"></div>
<div style="left:1269px;top:286px;width:1px;height:436px;background:#000"></div>
<div style="left:1351px;top:286px;width:1px;height:436px;background:#000"></div>
<div style="left:1446px;top:286px;width:1px;height:436px;background:#000"></div>
<div style="left:1522px;top:301px;width:1px;height:421px;background:#000"></div>
<div style="left:1589px;top:301px;width:1px;height:421px;background:#000"></div>
<div style="left:1777px;top:286px;width:1px;height:436px;background:#000"></div>
<div style="left:1852px;top:286px;width:1px;height:436px;background:#000"></div>
<div class="c" style="left:20px;top:296.5px;width:68px;height:12.8px;font-size:9.8px;color:#031544"><span style="position:absolute;left:50%;top:0;transform:translateX(-50%) scaleX(0.918);white-space:nowrap">BULAN</span></div>
<div class="c" style="left:89px;top:296.5px;width:86px;height:12.8px;font-size:9.8px;color:#031544"><span style="position:absolute;left:50%;top:0;transform:translateX(-50%) scaleX(1.06);white-space:nowrap">Jumlah Karyawan</span></div>
<div class="c" style="left:471px;top:296.5px;width:69px;height:12.8px;font-size:9.8px;color:#031544"><span style="position:absolute;left:50%;top:0;transform:translateX(-50%) scaleX(1.0);white-space:nowrap">Jumlah Karyawan Resign</span></div>
<div class="c" style="left:541px;top:296.5px;width:87px;height:12.8px;font-size:9.8px;color:#031544"><span style="position:absolute;left:50%;top:0;transform:translateX(-50%) scaleX(1.0);white-space:nowrap">DPP Karyawan Resign</span></div>
<div class="c" style="left:629px;top:296.5px;width:109px;height:12.8px;font-size:9.8px;color:#031544"><span style="position:absolute;left:50%;top:0;transform:translateX(-50%) scaleX(1.0);white-space:nowrap">PPh 21 Karyawan Resign</span></div>
<div class="c" style="left:739px;top:296.5px;width:139px;height:12.8px;font-size:9.8px;color:#031544"><span style="position:absolute;left:50%;top:0;transform:translateX(-50%) scaleX(1.0);white-space:nowrap">Jumlah Karyawan NIK Tidak Valid</span></div>
<div class="c" style="left:879px;top:296.5px;width:139px;height:12.8px;font-size:9.8px;color:#031544"><span style="position:absolute;left:50%;top:0;transform:translateX(-50%) scaleX(1.0);white-space:nowrap">DPP Karyawan NIK Tidak Valid</span></div>
<div class="c" style="left:1019px;top:296.5px;width:139px;height:12.8px;font-size:9.8px;color:#031544"><span style="position:absolute;left:50%;top:0;transform:translateX(-50%) scaleX(1.0);white-space:nowrap">PPh 21 Karyawan NIK Tidak Valid</span></div>
<div class="c" style="left:1159px;top:296.5px;width:110px;height:12.8px;font-size:9.8px;color:#031544"><span style="position:absolute;left:50%;top:0;transform:translateX(-50%) scaleX(1.0);white-space:nowrap">Total PPh 21 KB/ (LB)</span></div>
<div class="c" style="left:1270px;top:296.5px;width:81px;height:12.8px;font-size:9.8px;color:#031544"><span style="position:absolute;left:50%;top:0;transform:translateX(-50%) scaleX(0.995);white-space:nowrap">Selisih KB / (LB)</span></div>
<div class="c" style="left:1352px;top:296.5px;width:94px;height:12.8px;font-size:9.8px;color:#031544"><span style="position:absolute;left:50%;top:0;transform:translateX(-50%) scaleX(0.866);white-space:nowrap">TOTAL SSP</span></div>
<div class="c" style="left:1778px;top:296.5px;width:74px;height:12.8px;font-size:9.8px;color:#031544"><span style="position:absolute;left:50%;top:0;transform:translateX(-50%) scaleX(0.979);white-space:nowrap">TGL Lapor</span></div>
<div class="c" style="left:176px;top:289.5px;width:79px;height:12.8px;font-size:9.8px;color:#031544"><span style="position:absolute;left:50%;top:0;transform:translateX(-50%) scaleX(0.918);white-space:nowrap">GAJI</span></div>
<div class="c" style="left:256px;top:289.5px;width:214px;height:12.8px;font-size:9.8px;color:#031544"><span style="position:absolute;left:50%;top:0;transform:translateX(-50%) scaleX(0.918);white-space:nowrap">PPH 21</span></div>
<div class="c" style="left:176px;top:304px;width:79px;height:12.8px;font-size:9.8px;color:#031544"><span style="position:absolute;left:50%;top:0;transform:translateX(-50%) scaleX(1.017);white-space:nowrap">Pegawai TIM</span></div>
<div class="c" style="left:256px;top:304px;width:214px;height:12.8px;font-size:9.8px;color:#031544"><span style="position:absolute;left:50%;top:0;transform:translateX(-50%) scaleX(0.93);white-space:nowrap">Pegawai RAR,OS LAIN, TIM, PIM, BTS SALES</span></div>
<div class="c" style="left:1446px;top:289.5px;width:331px;height:13px;font-size:9.8px;color:#031544"><span style="position:absolute;left:50%;top:0;transform:translateX(-50%) scaleX(0.859)">SSP 1</span></div>
<div class="c" style="left:1447px;top:304px;width:75px;height:12.8px;font-size:9.8px;color:#031544"><span style="position:absolute;left:50%;top:0;transform:translateX(-50%) scaleX(1.1);white-space:nowrap">Nilai</span></div>
<div class="c" style="left:1523px;top:304px;width:66px;height:12.8px;font-size:9.8px;color:#031544;padding-left:1px"><span style="position:absolute;left:1px;top:0;transform:scaleX(0.902);transform-origin:0 0">TGL BAYAR</span></div>
<div class="c" style="left:1590px;top:304px;width:187px;height:12.8px;font-size:9.8px;color:#031544;padding-left:1px"><span style="position:absolute;left:1px;top:0;transform:scaleX(0.9);transform-origin:0 0">NTPN</span></div>
<div class="c" style="left:20px;top:319.8px;width:68px;height:13px;font-size:9.4px"><span style="position:absolute;left:2px;top:0;transform:scaleX(1.085);transform-origin:0 0">Januari</span></div>
<div class="c" style="left:176px;top:319.8px;width:79px;height:13px;font-size:9.4px"><span style="position:absolute;right:2.5px;top:0;transform:scaleX(1.12);transform-origin:100% 0">154.005.256</span></div>
<div class="c" style="left:256px;top:319.8px;width:214px;height:13px;font-size:9.4px"><span style="position:absolute;right:2.5px;top:0;transform:scaleX(1.12);transform-origin:100% 0">13.823</span></div>
<div class="c" style="left:1159px;top:319.8px;width:110px;height:13px;font-size:9.4px"><span style="position:absolute;right:5.5px;top:0;transform:scaleX(1.12);transform-origin:100% 0">13.823</span></div>
<div class="c" style="left:1270px;top:319.8px;width:81px;height:13px;font-size:9.4px"><span style="position:absolute;right:5px;top:0;transform:scaleX(1.12);transform-origin:100% 0">-</span></div>
<div class="c" style="left:1352px;top:319.8px;width:94px;height:13px;font-size:9.4px"><span style="position:absolute;right:5.5px;top:0;transform:scaleX(1.12);transform-origin:100% 0">13.823</span></div>
<div class="c" style="left:1447px;top:319.8px;width:75px;height:13px;font-size:9.4px"><span style="position:absolute;right:6px;top:0;transform:scaleX(1.12);transform-origin:100% 0">13.823</span></div>
<div class="c" style="left:1523px;top:319.3px;width:66px;height:13px;font-size:10.6px;text-align:right;padding-right:2px">20/02/2025</div>
<div class="c" style="left:1592px;top:319.3px;width:185px;height:13px;font-size:10.6px">KET-00530/PBK-CT/KPP.0616/2025</div>
<div class="c" style="left:1778px;top:319.3px;width:74px;height:13px;font-size:10.6px;text-align:right;padding-right:2px">20/02/2025</div>
<div class="c" style="left:20px;top:334.8px;width:68px;height:13px;font-size:9.4px"><span style="position:absolute;left:2px;top:0;transform:scaleX(1.085);transform-origin:0 0">Januari-P1</span></div>
<div class="c" style="left:89px;top:334.8px;width:86px;height:13px;font-size:9.4px"><span style="position:absolute;right:2px;top:0;transform:scaleX(1.12);transform-origin:100% 0">31,00</span></div>
<div class="c" style="left:176px;top:334.8px;width:79px;height:13px;font-size:9.4px"><span style="position:absolute;right:2.5px;top:0;transform:scaleX(1.12);transform-origin:100% 0">104.773.655</span></div>
<div class="c" style="left:256px;top:334.8px;width:214px;height:13px;font-size:9.4px"><span style="position:absolute;right:2.5px;top:0;transform:scaleX(1.12);transform-origin:100% 0">13.823</span></div>
<div class="c" style="left:471px;top:334.8px;width:69px;height:13px;font-size:9.4px"><span style="position:absolute;right:2px;top:0;transform:scaleX(1.12);transform-origin:100% 0">10</span></div>
<div class="c" style="left:541px;top:334.8px;width:87px;height:13px;font-size:9.4px"><span style="position:absolute;right:2.5px;top:0;transform:scaleX(1.12);transform-origin:100% 0">33.853.363</span></div>
<div class="c" style="left:629px;top:334.8px;width:109px;height:13px;font-size:9.4px"><span style="position:absolute;right:2.5px;top:0;transform:scaleX(1.12);transform-origin:100% 0">0</span></div>
<div class="c" style="left:739px;top:334.8px;width:139px;height:13px;font-size:9.4px"><span style="position:absolute;right:2.5px;top:0;transform:scaleX(1.12);transform-origin:100% 0">0</span></div>
<div class="c" style="left:879px;top:334.8px;width:139px;height:13px;font-size:9.4px"><span style="position:absolute;right:2px;top:0;transform:scaleX(1.12);transform-origin:100% 0">0</span></div>
<div class="c" style="left:1019px;top:334.8px;width:139px;height:13px;font-size:9.4px"><span style="position:absolute;right:2px;top:0;transform:scaleX(1.12);transform-origin:100% 0">0</span></div>
<div class="c" style="left:1159px;top:334.8px;width:110px;height:13px;font-size:9.4px"><span style="position:absolute;right:5.5px;top:0;transform:scaleX(1.12);transform-origin:100% 0">13.823</span></div>
<div class="c" style="left:1270px;top:334.8px;width:81px;height:13px;font-size:9.4px"><span style="position:absolute;right:5px;top:0;transform:scaleX(1.12);transform-origin:100% 0">-</span></div>
<div class="c" style="left:1352px;top:334.8px;width:94px;height:13px;font-size:9.4px"><span style="position:absolute;right:5.5px;top:0;transform:scaleX(1.12);transform-origin:100% 0">13.823</span></div>
<div class="c" style="left:1447px;top:334.8px;width:75px;height:13px;font-size:9.4px"><span style="position:absolute;right:6px;top:0;transform:scaleX(1.12);transform-origin:100% 0">13.823</span></div>
<div class="c" style="left:1523px;top:334.3px;width:66px;height:13px;font-size:10.6px;text-align:right;padding-right:2px">20/02/2025</div>
<div class="c" style="left:1592px;top:334.3px;width:185px;height:13px;font-size:10.6px">KET-00530/PBK-CT/KPP.0616/2025</div>
<div class="c" style="left:1778px;top:334.3px;width:74px;height:13px;font-size:10.6px;text-align:right;padding-right:2px">22/01/2026</div>
<div class="c" style="left:20px;top:349.8px;width:68px;height:13px;font-size:9.4px"><span style="position:absolute;left:2px;top:0;transform:scaleX(1.085);transform-origin:0 0">Februari</span></div>
<div class="c" style="left:176px;top:349.8px;width:79px;height:13px;font-size:9.4px"><span style="position:absolute;right:2.5px;top:0;transform:scaleX(1.12);transform-origin:100% 0">153.612.199</span></div>
<div class="c" style="left:256px;top:349.8px;width:214px;height:13px;font-size:9.4px"><span style="position:absolute;right:2.5px;top:0;transform:scaleX(1.12);transform-origin:100% 0">87.864</span></div>
<div class="c" style="left:1159px;top:349.8px;width:110px;height:13px;font-size:9.4px"><span style="position:absolute;right:5.5px;top:0;transform:scaleX(1.12);transform-origin:100% 0">87.864</span></div>
<div class="c" style="left:1270px;top:349.8px;width:81px;height:13px;font-size:9.4px"><span style="position:absolute;right:5px;top:0;transform:scaleX(1.12);transform-origin:100% 0">-</span></div>
<div class="c" style="left:1352px;top:349.8px;width:94px;height:13px;font-size:9.4px"><span style="position:absolute;right:5.5px;top:0;transform:scaleX(1.12);transform-origin:100% 0">87.864</span></div>
<div class="c" style="left:1447px;top:349.8px;width:75px;height:13px;font-size:9.4px"><span style="position:absolute;right:6px;top:0;transform:scaleX(1.12);transform-origin:100% 0">87.864</span></div>
<div class="c" style="left:1523px;top:349.3px;width:66px;height:13px;font-size:10.6px;text-align:right;padding-right:2px">14/03/2025</div>
<div class="c" style="left:1592px;top:349.3px;width:185px;height:13px;font-size:10.6px">KET-01490/PBK-CT/KPP.0616/2025</div>
<div class="c" style="left:1778px;top:349.3px;width:74px;height:13px;font-size:10.6px;text-align:right;padding-right:2px">22/03/2025</div>
<div class="c" style="left:20px;top:364.8px;width:68px;height:13px;font-size:9.4px"><span style="position:absolute;left:2px;top:0;transform:scaleX(1.085);transform-origin:0 0">Februari-P1</span></div>
<div class="c" style="left:89px;top:364.8px;width:86px;height:13px;font-size:9.4px"><span style="position:absolute;right:2px;top:0;transform:scaleX(1.12);transform-origin:100% 0">29,00</span></div>
<div class="c" style="left:176px;top:364.8px;width:79px;height:13px;font-size:9.4px"><span style="position:absolute;right:2.5px;top:0;transform:scaleX(1.12);transform-origin:100% 0">102.740.588</span></div>
<div class="c" style="left:256px;top:364.8px;width:214px;height:13px;font-size:9.4px"><span style="position:absolute;right:2.5px;top:0;transform:scaleX(1.12);transform-origin:100% 0">87.864</span></div>
<div class="c" style="left:471px;top:364.8px;width:69px;height:13px;font-size:9.4px"><span style="position:absolute;right:2px;top:0;transform:scaleX(1.12);transform-origin:100% 0">10</span></div>
<div class="c" style="left:541px;top:364.8px;width:87px;height:13px;font-size:9.4px"><span style="position:absolute;right:2.5px;top:0;transform:scaleX(1.12);transform-origin:100% 0">78.913.822</span></div>
<div class="c" style="left:629px;top:364.8px;width:109px;height:13px;font-size:9.4px"><span style="position:absolute;right:2.5px;top:0;transform:scaleX(1.12);transform-origin:100% 0">0</span></div>
<div class="c" style="left:739px;top:364.8px;width:139px;height:13px;font-size:9.4px"><span style="position:absolute;right:2.5px;top:0;transform:scaleX(1.12);transform-origin:100% 0">1</span></div>
<div class="c" style="left:879px;top:364.8px;width:139px;height:13px;font-size:9.4px"><span style="position:absolute;right:2px;top:0;transform:scaleX(1.12);transform-origin:100% 0">3.861.110</span></div>
<div class="c" style="left:1019px;top:364.8px;width:139px;height:13px;font-size:9.4px"><span style="position:absolute;right:2px;top:0;transform:scaleX(1.12);transform-origin:100% 0">0</span></div>
<div class="c" style="left:1159px;top:364.8px;width:110px;height:13px;font-size:9.4px"><span style="position:absolute;right:5.5px;top:0;transform:scaleX(1.12);transform-origin:100% 0">87.864</span></div>
<div class="c" style="left:1270px;top:364.8px;width:81px;height:13px;font-size:9.4px"><span style="position:absolute;right:5px;top:0;transform:scaleX(1.12);transform-origin:100% 0">-</span></div>
<div class="c" style="left:1352px;top:364.8px;width:94px;height:13px;font-size:9.4px"><span style="position:absolute;right:5.5px;top:0;transform:scaleX(1.12);transform-origin:100% 0">87.864</span></div>
<div class="c" style="left:1447px;top:364.8px;width:75px;height:13px;font-size:9.4px"><span style="position:absolute;right:6px;top:0;transform:scaleX(1.12);transform-origin:100% 0">87.864</span></div>
<div class="c" style="left:1523px;top:364.3px;width:66px;height:13px;font-size:10.6px;text-align:right;padding-right:2px">14/03/2025</div>
<div class="c" style="left:1592px;top:364.3px;width:185px;height:13px;font-size:10.6px">KET-01490/PBK-CT/KPP.0616/2025</div>
<div class="c" style="left:1778px;top:364.3px;width:74px;height:13px;font-size:10.6px;text-align:right;padding-right:2px">31/01/2026</div>
<div class="c" style="left:20px;top:379.8px;width:68px;height:13px;font-size:9.4px"><span style="position:absolute;left:2px;top:0;transform:scaleX(1.085);transform-origin:0 0">Maret</span></div>
<div class="c" style="left:176px;top:379.8px;width:79px;height:13px;font-size:9.4px"><span style="position:absolute;right:2.5px;top:0;transform:scaleX(1.12);transform-origin:100% 0">168.703.698</span></div>
<div class="c" style="left:256px;top:379.8px;width:214px;height:13px;font-size:9.4px"><span style="position:absolute;right:2.5px;top:0;transform:scaleX(1.12);transform-origin:100% 0">741.272</span></div>
<div class="c" style="left:1159px;top:379.8px;width:110px;height:13px;font-size:9.4px"><span style="position:absolute;right:5.5px;top:0;transform:scaleX(1.12);transform-origin:100% 0">741.272</span></div>
<div class="c" style="left:1270px;top:379.8px;width:81px;height:13px;font-size:9.4px"><span style="position:absolute;right:5px;top:0;transform:scaleX(1.12);transform-origin:100% 0">-</span></div>
<div class="c" style="left:1352px;top:379.8px;width:94px;height:13px;font-size:9.4px"><span style="position:absolute;right:5.5px;top:0;transform:scaleX(1.12);transform-origin:100% 0">741.272</span></div>
<div class="c" style="left:1447px;top:379.8px;width:75px;height:13px;font-size:9.4px"><span style="position:absolute;right:6px;top:0;transform:scaleX(1.12);transform-origin:100% 0">741.272</span></div>
<div class="c" style="left:1523px;top:379.3px;width:66px;height:13px;font-size:10.6px;text-align:right;padding-right:2px">15/04/2025</div>
<div class="c" style="left:1592px;top:379.3px;width:185px;height:13px;font-size:10.6px">AD8723IR22NKGTDJ</div>
<div class="c" style="left:1778px;top:379.3px;width:74px;height:13px;font-size:10.6px;text-align:right;padding-right:2px">15/04/2025</div>
<div class="c" style="left:20px;top:394.8px;width:68px;height:13px;font-size:9.4px"><span style="position:absolute;left:2px;top:0;transform:scaleX(1.085);transform-origin:0 0">Maret-P1</span></div>
<div class="c" style="left:89px;top:394.8px;width:86px;height:13px;font-size:9.4px"><span style="position:absolute;right:2px;top:0;transform:scaleX(1.12);transform-origin:100% 0">29,00</span></div>
<div class="c" style="left:176px;top:394.8px;width:79px;height:13px;font-size:9.4px"><span style="position:absolute;right:2.5px;top:0;transform:scaleX(1.12);transform-origin:100% 0">159.668.711</span></div>
<div class="c" style="left:256px;top:394.8px;width:214px;height:13px;font-size:9.4px"><span style="position:absolute;right:2.5px;top:0;transform:scaleX(1.12);transform-origin:100% 0">842.959</span></div>
<div class="c" style="left:471px;top:394.8px;width:69px;height:13px;font-size:9.4px"><span style="position:absolute;right:2px;top:0;transform:scaleX(1.12);transform-origin:100% 0">11</span></div>
<div class="c" style="left:541px;top:394.8px;width:87px;height:13px;font-size:9.4px"><span style="position:absolute;right:2.5px;top:0;transform:scaleX(1.12);transform-origin:100% 0">79.280.041</span></div>
<div class="c" style="left:629px;top:394.8px;width:109px;height:13px;font-size:9.4px"><span style="position:absolute;right:2.5px;top:0;transform:scaleX(1.12);transform-origin:100% 0">-101.687</span></div>
<div class="c" style="left:739px;top:394.8px;width:139px;height:13px;font-size:9.4px"><span style="position:absolute;right:2.5px;top:0;transform:scaleX(1.12);transform-origin:100% 0">0</span></div>
<div class="c" style="left:879px;top:394.8px;width:139px;height:13px;font-size:9.4px"><span style="position:absolute;right:2px;top:0;transform:scaleX(1.12);transform-origin:100% 0">0</span></div>
<div class="c" style="left:1019px;top:394.8px;width:139px;height:13px;font-size:9.4px"><span style="position:absolute;right:2px;top:0;transform:scaleX(1.12);transform-origin:100% 0">0</span></div>
<div class="c" style="left:1159px;top:394.8px;width:110px;height:13px;font-size:9.4px"><span style="position:absolute;right:5.5px;top:0;transform:scaleX(1.12);transform-origin:100% 0">741.272</span></div>
<div class="c" style="left:1352px;top:394.8px;width:94px;height:13px;font-size:9.4px"><span style="position:absolute;right:5.5px;top:0;transform:scaleX(1.12);transform-origin:100% 0">741.272</span></div>
<div class="c" style="left:1447px;top:394.8px;width:75px;height:13px;font-size:9.4px"><span style="position:absolute;right:6px;top:0;transform:scaleX(1.12);transform-origin:100% 0">741.272</span></div>
<div class="c" style="left:1523px;top:394.3px;width:66px;height:13px;font-size:10.6px;text-align:right;padding-right:2px">15/04/2025</div>
<div class="c" style="left:1592px;top:394.3px;width:185px;height:13px;font-size:10.6px">AD8723IR22NKGTDJ</div>
<div class="c" style="left:1778px;top:394.3px;width:74px;height:13px;font-size:10.6px;text-align:right;padding-right:2px">31/01/2026</div>
<div class="c" style="left:20px;top:410.0px;width:68px;height:13px;font-size:10.2px"><span style="position:absolute;left:2px;top:0;transform:scaleX(0.835);transform-origin:0 0">APRIL</span></div>
<div class="c" style="left:176px;top:409.8px;width:79px;height:13px;font-size:9.4px"><span style="position:absolute;right:2.5px;top:0;transform:scaleX(1.12);transform-origin:100% 0">171.994.017</span></div>
<div class="c" style="left:256px;top:409.8px;width:214px;height:13px;font-size:9.4px"><span style="position:absolute;right:2.5px;top:0;transform:scaleX(1.12);transform-origin:100% 0">-126.162</span></div>
<div class="c" style="left:1159px;top:409.8px;width:110px;height:13px;font-size:9.4px"><span style="position:absolute;right:1.5px;top:0;transform:scaleX(1.12);transform-origin:100% 0">(126.162)</span></div>
<div class="c" style="left:1270px;top:409.8px;width:81px;height:13px;font-size:9.4px"><span style="position:absolute;right:1.5px;top:0;transform:scaleX(1.12);transform-origin:100% 0">(126.162)</span></div>
<div class="c" style="left:1352px;top:409.8px;width:94px;height:13px;font-size:9.4px"><span style="position:absolute;right:5.5px;top:0;transform:scaleX(1.12);transform-origin:100% 0">-</span></div>
<div class="c" style="left:1778px;top:409.3px;width:74px;height:13px;font-size:10.6px;text-align:right;padding-right:2px">19/05/2025</div>
<div class="c" style="left:20px;top:424.8px;width:68px;height:13px;font-size:9.4px"><span style="position:absolute;left:2px;top:0;transform:scaleX(1.085);transform-origin:0 0">April-P1</span></div>
<div class="c" style="left:89px;top:424.8px;width:86px;height:13px;font-size:9.4px"><span style="position:absolute;right:2px;top:0;transform:scaleX(1.12);transform-origin:100% 0">32,00</span></div>
<div class="c" style="left:176px;top:424.8px;width:79px;height:13px;font-size:9.4px"><span style="position:absolute;right:2.5px;top:0;transform:scaleX(1.12);transform-origin:100% 0">137.121.460</span></div>
<div class="c" style="left:256px;top:424.8px;width:214px;height:13px;font-size:9.4px"><span style="position:absolute;right:2.5px;top:0;transform:scaleX(1.12);transform-origin:100% 0">78.082</span></div>
<div class="c" style="left:471px;top:424.8px;width:69px;height:13px;font-size:9.4px"><span style="position:absolute;right:2px;top:0;transform:scaleX(1.12);transform-origin:100% 0">11</span></div>
<div class="c" style="left:541px;top:424.8px;width:87px;height:13px;font-size:9.4px"><span style="position:absolute;right:2.5px;top:0;transform:scaleX(1.12);transform-origin:100% 0">98.838.364</span></div>
<div class="c" style="left:629px;top:424.8px;width:109px;height:13px;font-size:9.4px"><span style="position:absolute;right:2.5px;top:0;transform:scaleX(1.12);transform-origin:100% 0">-264.340</span></div>
<div class="c" style="left:739px;top:424.8px;width:139px;height:13px;font-size:9.4px"><span style="position:absolute;right:2.5px;top:0;transform:scaleX(1.12);transform-origin:100% 0">0</span></div>
<div class="c" style="left:879px;top:424.8px;width:139px;height:13px;font-size:9.4px"><span style="position:absolute;right:2px;top:0;transform:scaleX(1.12);transform-origin:100% 0">0</span></div>
<div class="c" style="left:1019px;top:424.8px;width:139px;height:13px;font-size:9.4px"><span style="position:absolute;right:2px;top:0;transform:scaleX(1.12);transform-origin:100% 0">0</span></div>
<div class="c" style="left:1159px;top:424.8px;width:110px;height:13px;font-size:9.4px"><span style="position:absolute;right:1.5px;top:0;transform:scaleX(1.12);transform-origin:100% 0">(186.258)</span></div>
<div class="c" style="left:1270px;top:424.8px;width:81px;height:13px;font-size:9.4px"><span style="position:absolute;right:1.5px;top:0;transform:scaleX(1.12);transform-origin:100% 0">(60.096)</span></div>
<div class="c" style="left:1352px;top:424.8px;width:94px;height:13px;font-size:9.4px"><span style="position:absolute;right:5.5px;top:0;transform:scaleX(1.12);transform-origin:100% 0">-</span></div>
<div class="c" style="left:1778px;top:424.3px;width:74px;height:13px;font-size:10.6px;text-align:right;padding-right:2px">31/01/2026</div>
<div class="c" style="left:20px;top:440.0px;width:68px;height:13px;font-size:10.2px"><span style="position:absolute;left:2px;top:0;transform:scaleX(0.835);transform-origin:0 0">MEI</span></div>
<div class="c" style="left:176px;top:439.8px;width:79px;height:13px;font-size:9.4px"><span style="position:absolute;right:2.5px;top:0;transform:scaleX(1.12);transform-origin:100% 0">239.250.372</span></div>
<div class="c" style="left:256px;top:439.8px;width:214px;height:13px;font-size:9.4px"><span style="position:absolute;right:2.5px;top:0;transform:scaleX(1.12);transform-origin:100% 0">193.038</span></div>
<div class="c" style="left:1159px;top:439.8px;width:110px;height:13px;font-size:9.4px"><span style="position:absolute;right:5.5px;top:0;transform:scaleX(1.12);transform-origin:100% 0">193.038</span></div>
<div class="c" style="left:1270px;top:439.8px;width:81px;height:13px;font-size:9.4px"><span style="position:absolute;right:1.5px;top:0;transform:scaleX(1.12);transform-origin:100% 0">(126.162)</span></div>
<div class="c" style="left:1352px;top:439.8px;width:94px;height:13px;font-size:9.4px"><span style="position:absolute;right:5.5px;top:0;transform:scaleX(1.12);transform-origin:100% 0">193.038</span></div>
<div class="c" style="left:1447px;top:439.8px;width:75px;height:13px;font-size:9.4px"><span style="position:absolute;right:6px;top:0;transform:scaleX(1.12);transform-origin:100% 0">66.876</span></div>
<div class="c" style="left:1523px;top:439.3px;width:66px;height:13px;font-size:10.6px;text-align:right;padding-right:2px">13/06/2025</div>
<div class="c" style="left:1592px;top:439.3px;width:185px;height:13px;font-size:10.6px">2FF6A683N6I3P3FJ</div>
<div class="c" style="left:1778px;top:439.3px;width:74px;height:13px;font-size:10.6px;text-align:right;padding-right:2px">13/06/2025</div>
<div class="c" style="left:176px;top:454.8px;width:79px;height:13px;font-size:9.4px"><span style="position:absolute;right:2.5px;top:0;transform:scaleX(1.12);transform-origin:100% 0">166.370.655</span></div>
<div class="c" style="left:256px;top:454.8px;width:214px;height:13px;font-size:9.4px"><span style="position:absolute;right:2.5px;top:0;transform:scaleX(1.12);transform-origin:100% 0">121.687</span></div>
<div class="c" style="left:541px;top:454.8px;width:87px;height:13px;font-size:9.4px"><span style="position:absolute;right:2.5px;top:0;transform:scaleX(1.12);transform-origin:100% 0">72.879.710</span></div>
<div class="c" style="left:629px;top:454.8px;width:109px;height:13px;font-size:9.4px"><span style="position:absolute;right:2.5px;top:0;transform:scaleX(1.12);transform-origin:100% 0">71.351</span></div>
<div class="c" style="left:20px;top:470.0px;width:68px;height:13px;font-size:10.2px"><span style="position:absolute;left:2px;top:0;transform:scaleX(0.835);transform-origin:0 0">JUNI</span></div>
<div class="c" style="left:176px;top:469.8px;width:79px;height:13px;font-size:9.4px"><span style="position:absolute;right:2.5px;top:0;transform:scaleX(1.12);transform-origin:100% 0">281.845.898</span></div>
<div class="c" style="left:256px;top:469.8px;width:214px;height:13px;font-size:9.4px"><span style="position:absolute;right:2.5px;top:0;transform:scaleX(1.12);transform-origin:100% 0">547.022</span></div>
<div class="c" style="left:1159px;top:469.8px;width:110px;height:13px;font-size:9.4px"><span style="position:absolute;right:5.5px;top:0;transform:scaleX(1.12);transform-origin:100% 0">547.022</span></div>
<div class="c" style="left:1270px;top:469.8px;width:81px;height:13px;font-size:9.4px"><span style="position:absolute;right:5px;top:0;transform:scaleX(1.12);transform-origin:100% 0">-</span></div>
<div class="c" style="left:1352px;top:469.8px;width:94px;height:13px;font-size:9.4px"><span style="position:absolute;right:5.5px;top:0;transform:scaleX(1.12);transform-origin:100% 0">547.022</span></div>
<div class="c" style="left:1447px;top:469.8px;width:75px;height:13px;font-size:9.4px"><span style="position:absolute;right:6px;top:0;transform:scaleX(1.12);transform-origin:100% 0">547.022</span></div>
<div class="c" style="left:1523px;top:469.3px;width:66px;height:13px;font-size:10.6px;text-align:right;padding-right:2px">15/07/2025</div>
<div class="c" style="left:1592px;top:469.3px;width:185px;height:13px;font-size:10.6px">B4CAE015AO2FJS2V</div>
<div class="c" style="left:1778px;top:469.3px;width:74px;height:13px;font-size:10.6px;text-align:right;padding-right:2px">15/07/2025</div>
<div class="c" style="left:89px;top:484.8px;width:86px;height:13px;font-size:9.4px"><span style="position:absolute;left:2px;top:0;transform:scaleX(1.085);transform-origin:0 0">masa</span></div>
<div class="c" style="left:176px;top:484.8px;width:79px;height:13px;font-size:9.4px"><span style="position:absolute;right:2.5px;top:0;transform:scaleX(1.12);transform-origin:100% 0">279.270.047</span></div>
<div class="c" style="left:256px;top:484.8px;width:214px;height:13px;font-size:9.4px"><span style="position:absolute;right:2.5px;top:0;transform:scaleX(1.12);transform-origin:100% 0">547.022</span></div>
<div class="c" style="left:89px;top:499.8px;width:86px;height:13px;font-size:9.4px"><span style="position:absolute;left:2px;top:0;transform:scaleX(1.085);transform-origin:0 0">a1</span></div>
<div class="c" style="left:176px;top:499.8px;width:79px;height:13px;font-size:9.4px"><span style="position:absolute;right:2.5px;top:0;transform:scaleX(1.12);transform-origin:100% 0">2.575.856</span></div>
<div class="c" style="left:256px;top:499.8px;width:214px;height:13px;font-size:9.4px"><span style="position:absolute;right:2.5px;top:0;transform:scaleX(1.12);transform-origin:100% 0">0</span></div>
<div class="c" style="left:20px;top:515.0px;width:68px;height:13px;font-size:10.2px"><span style="position:absolute;left:2px;top:0;transform:scaleX(0.835);transform-origin:0 0">JULI</span></div>
<div class="c" style="left:176px;top:514.8px;width:79px;height:13px;font-size:9.4px"><span style="position:absolute;right:2.5px;top:0;transform:scaleX(1.12);transform-origin:100% 0">273.209.284</span></div>
<div class="c" style="left:256px;top:514.8px;width:214px;height:13px;font-size:9.4px"><span style="position:absolute;right:2.5px;top:0;transform:scaleX(1.12);transform-origin:100% 0">516.693</span></div>
<div class="c" style="left:1159px;top:514.8px;width:110px;height:13px;font-size:9.4px"><span style="position:absolute;right:5.5px;top:0;transform:scaleX(1.12);transform-origin:100% 0">516.693</span></div>
<div class="c" style="left:1270px;top:514.8px;width:81px;height:13px;font-size:9.4px"><span style="position:absolute;right:5px;top:0;transform:scaleX(1.12);transform-origin:100% 0">-</span></div>
<div class="c" style="left:1352px;top:514.8px;width:94px;height:13px;font-size:9.4px"><span style="position:absolute;right:5.5px;top:0;transform:scaleX(1.12);transform-origin:100% 0">516.693</span></div>
<div class="c" style="left:1447px;top:514.8px;width:75px;height:13px;font-size:9.4px"><span style="position:absolute;right:6px;top:0;transform:scaleX(1.12);transform-origin:100% 0">516.693</span></div>
<div class="c" style="left:1523px;top:514.3px;width:66px;height:13px;font-size:10.6px;text-align:right;padding-right:2px">15/08/2025</div>
<div class="c" style="left:1592px;top:514.3px;width:185px;height:13px;font-size:10.6px">5DB3C2MDTCLMSUH8</div>
<div class="c" style="left:1778px;top:514.3px;width:74px;height:13px;font-size:10.6px;text-align:right;padding-right:2px">15/08/2025</div>
<div class="c" style="left:89px;top:529.8px;width:86px;height:13px;font-size:9.4px"><span style="position:absolute;left:2px;top:0;transform:scaleX(1.085);transform-origin:0 0">masa</span></div>
<div class="c" style="left:176px;top:529.8px;width:79px;height:13px;font-size:9.4px"><span style="position:absolute;right:2.5px;top:0;transform:scaleX(1.12);transform-origin:100% 0">195.706.912</span></div>
<div class="c" style="left:256px;top:529.8px;width:214px;height:13px;font-size:9.4px"><span style="position:absolute;right:2.5px;top:0;transform:scaleX(1.12);transform-origin:100% 0">512.876</span></div>
<div class="c" style="left:89px;top:544.8px;width:86px;height:13px;font-size:9.4px"><span style="position:absolute;left:2px;top:0;transform:scaleX(1.085);transform-origin:0 0">a1</span></div>
<div class="c" style="left:176px;top:544.8px;width:79px;height:13px;font-size:9.4px"><span style="position:absolute;right:2.5px;top:0;transform:scaleX(1.12);transform-origin:100% 0">77.502.372</span></div>
<div class="c" style="left:256px;top:544.8px;width:214px;height:13px;font-size:9.4px"><span style="position:absolute;right:2.5px;top:0;transform:scaleX(1.12);transform-origin:100% 0">143.436</span></div>
<div class="c" style="left:20px;top:560.0px;width:68px;height:13px;font-size:10.2px"><span style="position:absolute;left:2px;top:0;transform:scaleX(0.835);transform-origin:0 0">AGUSTUS</span></div>
<div class="c" style="left:176px;top:559.8px;width:79px;height:13px;font-size:9.4px"><span style="position:absolute;right:2.5px;top:0;transform:scaleX(1.12);transform-origin:100% 0">207.200.305</span></div>
<div class="c" style="left:256px;top:559.8px;width:214px;height:13px;font-size:9.4px"><span style="position:absolute;right:2.5px;top:0;transform:scaleX(1.12);transform-origin:100% 0">326.734</span></div>
<div class="c" style="left:1159px;top:559.8px;width:110px;height:13px;font-size:9.4px"><span style="position:absolute;right:5.5px;top:0;transform:scaleX(1.12);transform-origin:100% 0">326.734</span></div>
<div class="c" style="left:1270px;top:559.8px;width:81px;height:13px;font-size:9.4px"><span style="position:absolute;right:1.5px;top:0;transform:scaleX(1.12);transform-origin:100% 0">(0)</span></div>
<div class="c" style="left:1352px;top:559.8px;width:94px;height:13px;font-size:9.4px"><span style="position:absolute;right:5.5px;top:0;transform:scaleX(1.12);transform-origin:100% 0">326.734</span></div>
<div class="c" style="left:1447px;top:559.8px;width:75px;height:13px;font-size:9.4px"><span style="position:absolute;right:6px;top:0;transform:scaleX(1.12);transform-origin:100% 0">326.734</span></div>
<div class="c" style="left:1523px;top:559.3px;width:66px;height:13px;font-size:10.6px;text-align:right;padding-right:2px">15/09/2025</div>
<div class="c" style="left:1592px;top:559.3px;width:185px;height:13px;font-size:10.6px">4B5D55BME2BMADPU</div>
<div class="c" style="left:1778px;top:559.3px;width:74px;height:13px;font-size:10.6px;text-align:right;padding-right:2px">15/09/2025</div>
<div class="c" style="left:89px;top:574.8px;width:86px;height:13px;font-size:9.4px"><span style="position:absolute;left:2px;top:0;transform:scaleX(1.085);transform-origin:0 0">masa</span></div>
<div class="c" style="left:176px;top:574.8px;width:79px;height:13px;font-size:9.4px"><span style="position:absolute;right:2.5px;top:0;transform:scaleX(1.12);transform-origin:100% 0">196.401.821</span></div>
<div class="c" style="left:256px;top:574.8px;width:214px;height:13px;font-size:9.4px"><span style="position:absolute;right:2.5px;top:0;transform:scaleX(1.12);transform-origin:100% 0">684.669</span></div>
<div class="c" style="left:89px;top:589.8px;width:86px;height:13px;font-size:9.4px"><span style="position:absolute;left:2px;top:0;transform:scaleX(1.085);transform-origin:0 0">a1</span></div>
<div class="c" style="left:176px;top:589.8px;width:79px;height:13px;font-size:9.4px"><span style="position:absolute;right:2.5px;top:0;transform:scaleX(1.12);transform-origin:100% 0">10.798.484</span></div>
<div class="c" style="left:256px;top:589.8px;width:214px;height:13px;font-size:9.4px"><span style="position:absolute;right:2.5px;top:0;transform:scaleX(1.12);transform-origin:100% 0">0</span></div>
<div class="c" style="left:20px;top:605.0px;width:68px;height:13px;font-size:10.2px"><span style="position:absolute;left:2px;top:0;transform:scaleX(0.835);transform-origin:0 0">SEPTEMBER</span></div>
<div class="c" style="left:176px;top:604.8px;width:79px;height:13px;font-size:9.4px"><span style="position:absolute;right:2.5px;top:0;transform:scaleX(1.12);transform-origin:100% 0">201.454.109</span></div>
<div class="c" style="left:256px;top:604.8px;width:214px;height:13px;font-size:9.4px"><span style="position:absolute;right:2.5px;top:0;transform:scaleX(1.12);transform-origin:100% 0">265.628</span></div>
<div class="c" style="left:1159px;top:604.8px;width:110px;height:13px;font-size:9.4px"><span style="position:absolute;right:5.5px;top:0;transform:scaleX(1.12);transform-origin:100% 0">265.628</span></div>
<div class="c" style="left:1270px;top:604.8px;width:81px;height:13px;font-size:9.4px"><span style="position:absolute;right:5px;top:0;transform:scaleX(1.12);transform-origin:100% 0">-</span></div>
<div class="c" style="left:1352px;top:604.8px;width:94px;height:13px;font-size:9.4px"><span style="position:absolute;right:5.5px;top:0;transform:scaleX(1.12);transform-origin:100% 0">265.628</span></div>
<div class="c" style="left:1447px;top:604.8px;width:75px;height:13px;font-size:9.4px"><span style="position:absolute;right:6px;top:0;transform:scaleX(1.12);transform-origin:100% 0">265.628</span></div>
<div class="c" style="left:1523px;top:604.3px;width:66px;height:13px;font-size:10.6px;text-align:right;padding-right:2px">15/10/2025</div>
<div class="c" style="left:1592px;top:604.3px;width:185px;height:13px;font-size:10.6px">A61BA4F92F0RG16N</div>
<div class="c" style="left:1778px;top:604.3px;width:74px;height:13px;font-size:10.6px;text-align:right;padding-right:2px">15/10/2025</div>
<div class="c" style="left:20px;top:650.0px;width:68px;height:13px;font-size:10.2px"><span style="position:absolute;left:2px;top:0;transform:scaleX(0.835);transform-origin:0 0">OKTOBER</span></div>
<div class="c" style="left:176px;top:649.8px;width:79px;height:13px;font-size:9.4px"><span style="position:absolute;right:2.5px;top:0;transform:scaleX(1.12);transform-origin:100% 0">339.870.270</span></div>
<div class="c" style="left:256px;top:649.8px;width:214px;height:13px;font-size:9.4px"><span style="position:absolute;right:2.5px;top:0;transform:scaleX(1.12);transform-origin:100% 0">121.939</span></div>
<div class="c" style="left:1159px;top:649.8px;width:110px;height:13px;font-size:9.4px"><span style="position:absolute;right:5.5px;top:0;transform:scaleX(1.12);transform-origin:100% 0">121.939</span></div>
<div class="c" style="left:1270px;top:649.8px;width:81px;height:13px;font-size:9.4px"><span style="position:absolute;right:5px;top:0;transform:scaleX(1.12);transform-origin:100% 0">-</span></div>
<div class="c" style="left:1352px;top:649.8px;width:94px;height:13px;font-size:9.4px"><span style="position:absolute;right:5.5px;top:0;transform:scaleX(1.12);transform-origin:100% 0">121.939</span></div>
<div class="c" style="left:1447px;top:649.8px;width:75px;height:13px;font-size:9.4px"><span style="position:absolute;right:6px;top:0;transform:scaleX(1.12);transform-origin:100% 0">121.939</span></div>
<div class="c" style="left:1523px;top:649.3px;width:66px;height:13px;font-size:10.6px;text-align:right;padding-right:2px">14/11/2025</div>
<div class="c" style="left:1592px;top:649.3px;width:185px;height:13px;font-size:10.6px">883e7f5b-0e2f-4568-8cfc-753bd94fb0b1</div>
<div class="c" style="left:1778px;top:649.3px;width:74px;height:13px;font-size:10.6px;text-align:right;padding-right:2px">14/11/2025</div>
<div class="c" style="left:89px;top:664.8px;width:86px;height:13px;font-size:9.4px"><span style="position:absolute;left:2px;top:0;transform:scaleX(1.085);transform-origin:0 0">masa</span></div>
<div class="c" style="left:89px;top:679.8px;width:86px;height:13px;font-size:9.4px"><span style="position:absolute;left:2px;top:0;transform:scaleX(1.085);transform-origin:0 0">a1</span></div>
<div class="c" style="left:20px;top:695.0px;width:68px;height:13px;font-size:10.2px"><span style="position:absolute;left:2px;top:0;transform:scaleX(0.835);transform-origin:0 0">NOVEMBER</span></div>
<div class="c" style="left:176px;top:694.8px;width:79px;height:13px;font-size:9.4px"><span style="position:absolute;right:2.5px;top:0;transform:scaleX(1.12);transform-origin:100% 0">0</span></div>
<div class="c" style="left:256px;top:694.8px;width:214px;height:13px;font-size:9.4px"><span style="position:absolute;right:2.5px;top:0;transform:scaleX(1.12);transform-origin:100% 0">0</span></div>
<div class="c" style="left:1159px;top:694.8px;width:110px;height:13px;font-size:9.4px"><span style="position:absolute;right:5.5px;top:0;transform:scaleX(1.12);transform-origin:100% 0">-</span></div>
<div class="c" style="left:1270px;top:694.8px;width:81px;height:13px;font-size:9.4px"><span style="position:absolute;right:5px;top:0;transform:scaleX(1.12);transform-origin:100% 0">-</span></div>
<div class="c" style="left:1352px;top:694.8px;width:94px;height:13px;font-size:9.4px"><span style="position:absolute;right:5.5px;top:0;transform:scaleX(1.12);transform-origin:100% 0">-</span></div>
<div class="c" style="left:20px;top:710.0px;width:68px;height:13px;font-size:10.2px"><span style="position:absolute;left:2px;top:0;transform:scaleX(0.835);transform-origin:0 0">DESEMBER</span></div>
<div class="c" style="left:176px;top:709.8px;width:79px;height:13px;font-size:9.4px"><span style="position:absolute;right:2.5px;top:0;transform:scaleX(1.12);transform-origin:100% 0">0</span></div>
<div class="c" style="left:256px;top:709.8px;width:214px;height:13px;font-size:9.4px"><span style="position:absolute;right:2.5px;top:0;transform:scaleX(1.12);transform-origin:100% 0">0</span></div>
<div class="c" style="left:1159px;top:709.8px;width:110px;height:13px;font-size:9.4px"><span style="position:absolute;right:5.5px;top:0;transform:scaleX(1.12);transform-origin:100% 0">-</span></div>
<div class="c" style="left:1270px;top:709.8px;width:81px;height:13px;font-size:9.4px"><span style="position:absolute;right:5px;top:0;transform:scaleX(1.12);transform-origin:100% 0">-</span></div>
<div class="c" style="left:1352px;top:709.8px;width:94px;height:13px;font-size:9.4px"><span style="position:absolute;right:5.5px;top:0;transform:scaleX(1.12);transform-origin:100% 0">-</span></div>
<div style="left:256px;top:422px;width:214px;height:14px;background:rgba(120,150,220,0.08)"></div>
<div style="left:255px;top:420.5px;width:216px;height:1.6px;background:#5a73d0"></div>
<div style="left:255px;top:435.5px;width:216px;height:1.6px;background:#5a73d0"></div>
<div style="left:254.7px;top:421px;width:1.4px;height:16px;background:#5a73d0"></div>
<div style="left:469.7px;top:421px;width:1.4px;height:16px;background:#5a73d0"></div>
<div style="left:253px;top:419px;width:5px;height:5px;background:#8fb0e6"></div>
<div style="left:468px;top:419px;width:5px;height:5px;background:#8fb0e6"></div>
<div style="left:253px;top:434px;width:5px;height:5px;background:#8fb0e6"></div>
<div style="left:468px;top:434px;width:5px;height:5px;background:#8fb0e6"></div>
<div style="left:629px;top:422px;width:109px;height:14px;background:rgba(240,120,140,0.06)"></div>
<div style="left:628px;top:420.5px;width:111px;height:1.6px;background:#e06070"></div>
<div style="left:628px;top:435.5px;width:111px;height:1.6px;background:#e06070"></div>
<div style="left:627.7px;top:421px;width:1.4px;height:16px;background:#e06070"></div>
<div style="left:737.7px;top:421px;width:1.4px;height:16px;background:#e06070"></div>
<div style="left:626px;top:419px;width:5px;height:5px;background:#f08a98"></div>
<div style="left:736px;top:419px;width:5px;height:5px;background:#f08a98"></div>
<div style="left:626px;top:434px;width:5px;height:5px;background:#f08a98"></div>
<div style="left:736px;top:434px;width:5px;height:5px;background:#f08a98"></div>
<div style="left:1158px;top:421px;width:112px;height:2px;background:#1e6e47"></div>
<div style="left:1158px;top:436px;width:110px;height:2px;background:#1e6e47"></div>
<div style="left:1158px;top:421px;width:2px;height:17px;background:#1e6e47"></div>
<div style="left:1268px;top:421px;width:2px;height:14px;background:#1e6e47"></div>
<div style="left:1267px;top:435px;width:5px;height:5px;background:#1e6e47;border:1px solid #fff"></div>
<div style="left:0px;top:257px;width:1897px;height:15px;background:#0b0b0b"></div>
<div style="left:1775px;top:257px;width:1px;height:15px;background:#3a3a3a"></div>
<div style="left:1779px;top:257px;width:1px;height:15px;background:#3a3a3a"></div>
<svg style="left:8px;top:263px" width="8" height="7" viewBox="0 0 8 7"><path d="M7.5 0 V6.5 H0.5 Z" fill="#6a6a6a"/></svg>
<div style="left:19px;top:258px;width:1px;height:14px;background:#3a3a3a"></div>
<div style="left:88px;top:257px;width:1px;height:15px;background:#3a3a3a"></div>
<div class="ch" style="left:19px;top:261.5px;width:69px;color:#d8d8d8">B</div>
<div style="left:175px;top:257px;width:1px;height:15px;background:#3a3a3a"></div>
<div class="ch" style="left:88px;top:261.5px;width:87px;color:#d8d8d8">C</div>
<div style="left:255px;top:257px;width:1px;height:15px;background:#3a3a3a"></div>
<div class="ch" style="left:175px;top:261.5px;width:80px;color:#d8d8d8">D</div>
<div style="left:470px;top:257px;width:1px;height:15px;background:#3a3a3a"></div>
<div class="ch" style="left:255px;top:261.5px;width:215px;color:#d8d8d8">E</div>
<div style="left:540px;top:257px;width:1px;height:15px;background:#3a3a3a"></div>
<div class="ch" style="left:470px;top:261.5px;width:70px;color:#d8d8d8">F</div>
<div style="left:628px;top:257px;width:1px;height:15px;background:#3a3a3a"></div>
<div class="ch" style="left:540px;top:261.5px;width:88px;color:#d8d8d8">G</div>
<div style="left:738px;top:257px;width:1px;height:15px;background:#3a3a3a"></div>
<div class="ch" style="left:628px;top:261.5px;width:110px;color:#d8d8d8">H</div>
<div style="left:878px;top:257px;width:1px;height:15px;background:#3a3a3a"></div>
<div class="ch" style="left:738px;top:261.5px;width:140px;color:#d8d8d8">I</div>
<div style="left:1018px;top:257px;width:1px;height:15px;background:#3a3a3a"></div>
<div class="ch" style="left:878px;top:261.5px;width:140px;color:#d8d8d8">J</div>
<div style="left:1158px;top:257px;width:1px;height:15px;background:#3a3a3a"></div>
<div class="ch" style="left:1018px;top:261.5px;width:140px;color:#d8d8d8">K</div>
<div style="left:1159px;top:258px;width:110px;height:13px;background:#6b6b6b"></div>
<div style="left:1159px;top:270px;width:110px;height:2px;background:#2e7d4f"></div>
<div style="left:1269px;top:257px;width:1px;height:15px;background:#3a3a3a"></div>
<div class="ch" style="left:1158px;top:261.5px;width:111px;color:#ffffff">L</div>
<div style="left:1351px;top:257px;width:1px;height:15px;background:#3a3a3a"></div>
<div class="ch" style="left:1269px;top:261.5px;width:82px;color:#d8d8d8">M</div>
<div style="left:1446px;top:257px;width:1px;height:15px;background:#3a3a3a"></div>
<div class="ch" style="left:1351px;top:261.5px;width:95px;color:#d8d8d8">N</div>
<div style="left:1522px;top:257px;width:1px;height:15px;background:#3a3a3a"></div>
<div class="ch" style="left:1446px;top:261.5px;width:76px;color:#d8d8d8">O</div>
<div style="left:1589px;top:257px;width:1px;height:15px;background:#3a3a3a"></div>
<div class="ch" style="left:1522px;top:261.5px;width:67px;color:#d8d8d8">P</div>
<div class="ch" style="left:1589px;top:261.5px;width:188px;color:#d8d8d8">Q</div>
<div style="left:1852px;top:257px;width:1px;height:15px;background:#3a3a3a"></div>
<div class="ch" style="left:1777px;top:261.5px;width:75px;color:#d8d8d8">X</div>
<div style="left:1897px;top:257px;width:1px;height:15px;background:#3a3a3a"></div>
<div class="ch" style="left:1852px;top:261.5px;width:45px;color:#d8d8d8">Y</div>
<div style="left:0px;top:272px;width:19px;height:705px;background:#0b0b0b"></div>
<div style="left:0px;top:286px;width:19px;height:1px;background:#3c3c3c"></div>
<div class="rh" style="left:0px;top:275px;width:19.5px;text-align:center;color:#dedede">1</div>
<div style="left:0px;top:301px;width:19px;height:1px;background:#3c3c3c"></div>
<div class="rh" style="left:0px;top:290px;width:19.5px;text-align:center;color:#dedede">2</div>
<div style="left:0px;top:316px;width:19px;height:1px;background:#3c3c3c"></div>
<div class="rh" style="left:0px;top:305px;width:19.5px;text-align:center;color:#dedede">3</div>
<div style="left:0px;top:331px;width:19px;height:1px;background:#3c3c3c"></div>
<div class="rh" style="left:0px;top:320px;width:19.5px;text-align:center;color:#dedede">4</div>
<div style="left:0px;top:346px;width:19px;height:1px;background:#3c3c3c"></div>
<div class="rh" style="left:0px;top:335px;width:19.5px;text-align:center;color:#dedede">5</div>
<div style="left:0px;top:361px;width:19px;height:1px;background:#3c3c3c"></div>
<div class="rh" style="left:0px;top:350px;width:19.5px;text-align:center;color:#dedede">6</div>
<div style="left:0px;top:376px;width:19px;height:1px;background:#3c3c3c"></div>
<div class="rh" style="left:0px;top:365px;width:19.5px;text-align:center;color:#dedede">7</div>
<div style="left:0px;top:391px;width:19px;height:1px;background:#3c3c3c"></div>
<div class="rh" style="left:0px;top:380px;width:19.5px;text-align:center;color:#dedede">8</div>
<div style="left:0px;top:406px;width:19px;height:1px;background:#3c3c3c"></div>
<div class="rh" style="left:0px;top:395px;width:19.5px;text-align:center;color:#dedede">9</div>
<div style="left:0px;top:421px;width:19px;height:1px;background:#3c3c3c"></div>
<div class="rh" style="left:0px;top:410px;width:19.5px;text-align:center;color:#dedede">10</div>
<div style="left:0px;top:422px;width:18px;height:14px;background:#6b6b6b"></div>
<div style="left:17px;top:421px;width:2px;height:16px;background:#2e7d4f"></div>
<div style="left:0px;top:436px;width:19px;height:1px;background:#3c3c3c"></div>
<div class="rh" style="left:0px;top:425px;width:19.5px;text-align:center;color:#fff">11</div>
<div style="left:0px;top:451px;width:19px;height:1px;background:#3c3c3c"></div>
<div class="rh" style="left:0px;top:440px;width:19.5px;text-align:center;color:#dedede">12</div>
<div style="left:0px;top:466px;width:19px;height:1px;background:#3c3c3c"></div>
<div class="rh" style="left:0px;top:455px;width:19.5px;text-align:center;color:#dedede">13</div>
<div style="left:0px;top:481px;width:19px;height:1px;background:#3c3c3c"></div>
<div class="rh" style="left:0px;top:470px;width:19.5px;text-align:center;color:#dedede">14</div>
<div style="left:0px;top:496px;width:19px;height:1px;background:#3c3c3c"></div>
<div class="rh" style="left:0px;top:485px;width:19.5px;text-align:center;color:#dedede">15</div>
<div style="left:0px;top:511px;width:19px;height:1px;background:#3c3c3c"></div>
<div class="rh" style="left:0px;top:500px;width:19.5px;text-align:center;color:#dedede">16</div>
<div style="left:0px;top:526px;width:19px;height:1px;background:#3c3c3c"></div>
<div class="rh" style="left:0px;top:515px;width:19.5px;text-align:center;color:#dedede">17</div>
<div style="left:0px;top:541px;width:19px;height:1px;background:#3c3c3c"></div>
<div class="rh" style="left:0px;top:530px;width:19.5px;text-align:center;color:#dedede">18</div>
<div style="left:0px;top:556px;width:19px;height:1px;background:#3c3c3c"></div>
<div class="rh" style="left:0px;top:545px;width:19.5px;text-align:center;color:#dedede">19</div>
<div style="left:0px;top:571px;width:19px;height:1px;background:#3c3c3c"></div>
<div class="rh" style="left:0px;top:560px;width:19.5px;text-align:center;color:#dedede">20</div>
<div style="left:0px;top:586px;width:19px;height:1px;background:#3c3c3c"></div>
<div class="rh" style="left:0px;top:575px;width:19.5px;text-align:center;color:#dedede">21</div>
<div style="left:0px;top:601px;width:19px;height:1px;background:#3c3c3c"></div>
<div class="rh" style="left:0px;top:590px;width:19.5px;text-align:center;color:#dedede">22</div>
<div style="left:0px;top:616px;width:19px;height:1px;background:#3c3c3c"></div>
<div class="rh" style="left:0px;top:605px;width:19.5px;text-align:center;color:#dedede">23</div>
<div style="left:0px;top:631px;width:19px;height:1px;background:#3c3c3c"></div>
<div class="rh" style="left:0px;top:620px;width:19.5px;text-align:center;color:#dedede">24</div>
<div style="left:0px;top:646px;width:19px;height:1px;background:#3c3c3c"></div>
<div class="rh" style="left:0px;top:635px;width:19.5px;text-align:center;color:#dedede">25</div>
<div style="left:0px;top:661px;width:19px;height:1px;background:#3c3c3c"></div>
<div class="rh" style="left:0px;top:650px;width:19.5px;text-align:center;color:#dedede">26</div>
<div style="left:0px;top:676px;width:19px;height:1px;background:#3c3c3c"></div>
<div class="rh" style="left:0px;top:665px;width:19.5px;text-align:center;color:#dedede">27</div>
<div style="left:0px;top:691px;width:19px;height:1px;background:#3c3c3c"></div>
<div class="rh" style="left:0px;top:680px;width:19.5px;text-align:center;color:#dedede">28</div>
<div style="left:0px;top:706px;width:19px;height:1px;background:#3c3c3c"></div>
<div class="rh" style="left:0px;top:695px;width:19.5px;text-align:center;color:#dedede">29</div>
<div style="left:0px;top:721px;width:19px;height:1px;background:#3c3c3c"></div>
<div class="rh" style="left:0px;top:710px;width:19.5px;text-align:center;color:#dedede">30</div>
<div style="left:0px;top:735px;width:19px;height:1px;background:#3c3c3c"></div>
<div class="rh" style="left:0px;top:724.5px;width:19.5px;text-align:center;color:#dedede">31</div>
<div style="left:0px;top:749px;width:19px;height:1px;background:#3c3c3c"></div>
<div class="rh" style="left:0px;top:738.5px;width:19.5px;text-align:center;color:#dedede">32</div>
<div style="left:0px;top:763px;width:19px;height:1px;background:#3c3c3c"></div>
<div class="rh" style="left:0px;top:752.5px;width:19.5px;text-align:center;color:#dedede">33</div>
<div style="left:0px;top:777px;width:19px;height:1px;background:#3c3c3c"></div>
<div class="rh" style="left:0px;top:766.5px;width:19.5px;text-align:center;color:#dedede">34</div>
<div style="left:0px;top:791px;width:19px;height:1px;background:#3c3c3c"></div>
<div class="rh" style="left:0px;top:780.5px;width:19.5px;text-align:center;color:#dedede">35</div>
<div style="left:0px;top:805px;width:19px;height:1px;background:#3c3c3c"></div>
<div class="rh" style="left:0px;top:794.5px;width:19.5px;text-align:center;color:#dedede">36</div>
<div style="left:0px;top:819px;width:19px;height:1px;background:#3c3c3c"></div>
<div class="rh" style="left:0px;top:808.5px;width:19.5px;text-align:center;color:#dedede">37</div>
<div style="left:0px;top:833px;width:19px;height:1px;background:#3c3c3c"></div>
<div class="rh" style="left:0px;top:822.5px;width:19.5px;text-align:center;color:#dedede">38</div>
<div style="left:0px;top:847px;width:19px;height:1px;background:#3c3c3c"></div>
<div class="rh" style="left:0px;top:836.5px;width:19.5px;text-align:center;color:#dedede">39</div>
<div style="left:0px;top:861px;width:19px;height:1px;background:#3c3c3c"></div>
<div class="rh" style="left:0px;top:850.5px;width:19.5px;text-align:center;color:#dedede">40</div>
<div style="left:0px;top:875px;width:19px;height:1px;background:#3c3c3c"></div>
<div class="rh" style="left:0px;top:864.5px;width:19.5px;text-align:center;color:#dedede">41</div>
<div style="left:0px;top:889px;width:19px;height:1px;background:#3c3c3c"></div>
<div class="rh" style="left:0px;top:878.5px;width:19.5px;text-align:center;color:#dedede">42</div>
<div style="left:0px;top:903px;width:19px;height:1px;background:#3c3c3c"></div>
<div class="rh" style="left:0px;top:892.5px;width:19.5px;text-align:center;color:#dedede">43</div>
<div style="left:0px;top:917px;width:19px;height:1px;background:#3c3c3c"></div>
<div class="rh" style="left:0px;top:906.5px;width:19.5px;text-align:center;color:#dedede">44</div>
<div style="left:0px;top:931px;width:19px;height:1px;background:#3c3c3c"></div>
<div class="rh" style="left:0px;top:920.5px;width:19.5px;text-align:center;color:#dedede">45</div>
<div style="left:0px;top:945px;width:19px;height:1px;background:#3c3c3c"></div>
<div class="rh" style="left:0px;top:934.5px;width:19.5px;text-align:center;color:#dedede">46</div>
<div style="left:0px;top:959px;width:19px;height:1px;background:#3c3c3c"></div>
<div class="rh" style="left:0px;top:948.5px;width:19.5px;text-align:center;color:#dedede">47</div>
<div style="left:0px;top:973px;width:19px;height:1px;background:#3c3c3c"></div>
<div class="rh" style="left:0px;top:962.5px;width:19.5px;text-align:center;color:#dedede">48</div>
<div style="left:0px;top:987px;width:19px;height:1px;background:#3c3c3c"></div>
<div class="rh" style="left:0px;top:976.5px;width:19.5px;text-align:center;color:#dedede">49</div>
<div style="left:1897px;top:258px;width:23px;height:719px;background:#0e0d0c"></div>
<svg style="left:1904px;top:263px" width="10" height="8" viewBox="0 0 10 8"><path d="M5 0.5 L9.5 7.5 H0.5 Z" fill="#a0a0a0"/></svg>
<div style="left:1905px;top:276px;width:9px;height:672px;background:#9a9a9a;border-radius:5px"></div>
<svg style="left:1904px;top:967px" width="10" height="8" viewBox="0 0 10 8"><path d="M5 7.5 L9.5 0.5 H0.5 Z" fill="#a0a0a0"/></svg>
<div style="left:0px;top:977px;width:1920px;height:33px;background:#0f0d0c"></div>
<svg style="left:28px;top:987px" width="8" height="12" viewBox="0 0 8 12" fill="none" stroke="#8a8a8a" stroke-width="1.1"><path d="M6.5 0.8 L1.5 6 L6.5 11.2"/></svg>
<svg style="left:60px;top:987px" width="8" height="12" viewBox="0 0 8 12" fill="none" stroke="#cfcfcf" stroke-width="1.1"><path d="M1.5 0.8 L6.5 6 L1.5 11.2"/></svg>
<svg style="left:108px;top:977px" width="76" height="30" viewBox="0 0 76 30"><defs><linearGradient id="tg" x1="0" y1="0" x2="0" y2="1"><stop offset="0" stop-color="#fffdf6"/><stop offset="1" stop-color="#fbe9c3"/></linearGradient></defs>
<path d="M0 0 H76 Q68 0 68 6 V24 Q68 29 63 29 H13 Q8 29 8 24 V6 Q8 0 0 0 Z" fill="url(#tg)"/></svg>
<div class="t" style="left:124px;top:985px;font-size:13.5px;color:#222">PPH 21</div>
<div style="left:124px;top:1001px;width:44px;height:2px;background:#2f8f3f"></div>
<div style="left:180px;top:986px;width:1px;height:17px;background:#3a3a3a"></div>
<div class="t" style="left:194px;top:987.5px;font-size:13.5px;color:#f0f0f0">Karyawan Tetap</div>
<div style="left:305px;top:986px;width:1px;height:17px;background:#3a3a3a"></div>
<div class="t" style="left:320px;top:987.5px;font-size:13.5px;color:#f0f0f0">A1-Karyawan Resign</div>
<div style="left:460px;top:986px;width:1px;height:17px;background:#3a3a3a"></div>
<div class="t" style="left:475px;top:987.5px;font-size:13.5px;color:#f0f0f0">Karyawan NIK Tidak Valid</div>
<div style="left:647px;top:986px;width:1px;height:17px;background:#3a3a3a"></div>
<div class="t" style="left:660px;top:987.5px;font-size:13.5px;color:#f0f0f0">PPN</div>
<div style="left:700px;top:986px;width:1px;height:17px;background:#3a3a3a"></div>
<div class="t" style="left:712px;top:987.5px;font-size:13.5px;color:#f0f0f0">A2</div>
<div style="left:742px;top:986px;width:1px;height:17px;background:#3a3a3a"></div>
<div class="t" style="left:756px;top:987.5px;font-size:12.7px;color:#f0f0f0">PREPAID PPH 23</div>
<div style="left:873px;top:986px;width:1px;height:17px;background:#3a3a3a"></div>
<div style="left:892px;top:992px;width:3px;height:3px;background:#e0e0e0"></div>
<div style="left:896.5px;top:992px;width:3px;height:3px;background:#e0e0e0"></div>
<div style="left:901px;top:992px;width:3px;height:3px;background:#e0e0e0"></div>
<svg style="left:924px;top:987px" width="13" height="13" viewBox="0 0 13 13" fill="none" stroke="#e0e0e0" stroke-width="1.1"><path d="M6.5 0.5 V12.5 M0.5 6.5 H12.5"/></svg>
<div style="left:962px;top:989px;width:2px;height:2px;background:#e0e0e0;border-radius:1px"></div>
<div style="left:962px;top:994px;width:2px;height:2px;background:#e0e0e0;border-radius:1px"></div>
<div style="left:962px;top:999px;width:2px;height:2px;background:#e0e0e0;border-radius:1px"></div>
<svg style="left:983px;top:989px" width="7" height="9" viewBox="0 0 7 9"><path d="M6.5 0.5 V8.5 L0.5 4.5 Z" fill="#8a8a8a"/></svg>
<div style="left:1032px;top:989px;width:852px;height:10px;background:#9d9d9d;border-radius:5px"></div>
<svg style="left:1889px;top:989px" width="7" height="9" viewBox="0 0 7 9"><path d="M0.5 0.5 V8.5 L6.5 4.5 Z" fill="#a0a0a0"/></svg>
<div style="left:0px;top:1009px;width:1920px;height:1px;background:#363432"></div>
<div style="left:0px;top:1010px;width:1920px;height:22px;background:#151414"></div>
<div class="t" style="left:12px;top:1015px;font-size:11.3px;color:#e8e8e8">Ready</div>
<div class="t" style="left:58px;top:1015px;font-size:11.5px;color:#e8e8e8">Calculate</div>
<svg style="left:124px;top:1013px" width="16" height="16" viewBox="0 0 16 16" fill="none" stroke="#e0e0e0" stroke-width="1"><circle cx="7" cy="2.5" r="1.8"/><path d="M1 5 Q7 6.5 13 5 M7 6 V9 L4 15 M7 9 L9 12"/><path d="M10 11 L15 16 M15 11 L10 16"/></svg>
<div class="t" style="left:143px;top:1015px;font-size:11.5px;color:#f0f0f0;font-weight:bold;letter-spacing:-0.4px">Accessibility: Investigate</div>
<svg style="left:1632px;top:1014px" width="14" height="14" viewBox="0 0 14 14" fill="none" stroke="#707070" stroke-width="1"><rect x="0.5" y="0.5" width="13" height="13"/><path d="M4.8 0.5 V13.5 M9.2 0.5 V13.5 M0.5 4.8 H13.5 M0.5 9.2 H13.5"/></svg>
<svg style="left:1672px;top:1014px" width="14" height="14" viewBox="0 0 14 14" fill="none" stroke="#707070" stroke-width="1"><rect x="0.5" y="0.5" width="13" height="13"/><rect x="3" y="2.5" width="8" height="9"/><path d="M4.5 5 H9.5 M4.5 7 H9.5 M4.5 9 H9.5"/></svg>
<svg style="left:1712px;top:1014px" width="14" height="14" viewBox="0 0 14 14" fill="none" stroke="#707070" stroke-width="1"><rect x="0.5" y="0.5" width="13" height="13"/><path d="M0.5 8.5 H7 V0.5 M7 0.5 V8.5"/></svg>
<div style="left:1745px;top:1020px;width:8px;height:1px;background:#6a6a6a"></div>
<div style="left:1758px;top:1021px;width:100px;height:1px;background:#8f8f8f"></div>
<div style="left:1808px;top:1017px;width:1px;height:8px;background:#8a8a8a"></div>
<svg style="left:1862px;top:1016px" width="10" height="10" viewBox="0 0 10 10" fill="none" stroke="#6a6a6a" stroke-width="1"><path d="M5 0 V10 M0 5 H10"/></svg>
<div class="t" style="left:1884px;top:1016px;font-size:11px;color:#6a6a6a">70%</div>
<div style="left:0px;top:1032px;width:1920px;height:48px;background:linear-gradient(90deg,#1c1918 0%,#1e1a18 30%,#201c1a 55%,#1e1d1d 64%,#1e2125 72%,#1f2226 80%,#262320 90%,#2d2419 100%)"></div>
<div style="left:0px;top:1032px;width:1920px;height:1px;background:#45413d"></div>
<svg style="left:18px;top:1044px" width="24" height="24" viewBox="0 0 24 24"><path d="M0.5 13 Q4 4 11 4 Q18 4 22 13 Q20 11.5 18 12.5 Q15 11 11 12.5 Q7 11 4 12.5 Q2 11.5 0.5 13 Z" fill="#8cc8f8"/><path d="M11 12 V20 Q11 22.5 9 22.5 Q7 22.5 7 20.5" fill="none" stroke="#b0a0a8" stroke-width="1.6"/></svg>
<svg style="left:30px;top:1039px" width="17" height="17" viewBox="0 0 17 17"><circle cx="8.5" cy="8.5" r="8" fill="#f3a6b0"/><text x="8.5" y="12.5" text-anchor="middle" font-size="11" fill="#6a0e18" font-family="Liberation Sans">3</text></svg>
<div class="t" style="left:50px;top:1042px;font-size:12.2px;color:#f0f0f0">Hari hujan yang...</div>
<div class="t" style="left:50px;top:1059px;font-size:11.5px;color:#d8d8d8">29°C</div>
<svg style="left:617px;top:1045px" width="23" height="23" viewBox="0 0 23 23"><defs><linearGradient id="wg" x1="0" y1="0" x2="1" y2="1"><stop offset="0" stop-color="#5bd3ff"/><stop offset="1" stop-color="#1a8be0"/></linearGradient></defs>
<rect x="0" y="0" width="11" height="11" fill="url(#wg)"/><rect x="12" y="0" width="11" height="11" fill="url(#wg)"/><rect x="0" y="12" width="11" height="11" fill="url(#wg)"/><rect x="12" y="12" width="11" height="11" fill="url(#wg)"/></svg>
<div style="left:654px;top:1040px;width:219px;height:32px;background:linear-gradient(90deg,#433d3b,#3d3634 60%,#3a3230);border:1px solid #5a5452;border-top-color:#6e6764;border-radius:16px"></div>
<svg style="left:664px;top:1048px" width="16" height="16" viewBox="0 0 16 16" fill="none" stroke="#e8e8e8" stroke-width="1.5"><circle cx="6.8" cy="6.8" r="5.3"/><path d="M10.7 10.7 L15 15"/></svg>
<div class="t" style="left:690px;top:1049px;font-size:13px;color:#d8d8d8">Search</div>
<svg style="left:822px;top:1041px" width="48" height="30" viewBox="0 0 48 30">
<ellipse cx="24" cy="26" rx="21" ry="3" fill="#d9ceb0"/>
<path d="M10 9 Q8 6 11 4 L14 3 L16 6 Q22 8 30 8 Q34 8 34 13 L33 17 L32 25 L30 25 L30 18 L17 18 L16 25 L14 25 L13 15 Q11 14 9 11 Z" fill="#e6e0f0"/>
<path d="M15 6 L17 12 M18 7 L20 13 M21 8 L23 14 M24 8 L25 15 M27 8 L28 15 M30 9 L31 15" stroke="#5a4a8a" stroke-width="1.3"/>
<path d="M30 9 Q35 9 36 13" stroke="#7a6aaa" stroke-width="1.5" fill="none"/>
</svg>
<svg style="left:885px;top:1044px" width="24" height="24" viewBox="0 0 24 24"><rect x="1" y="8" width="14" height="14" rx="1.5" fill="#6a6a6a"/><rect x="8" y="2" width="15" height="14" rx="1.5" fill="#e8e8e8"/><rect x="5" y="5" width="12" height="12" fill="#a8a8a8" opacity="0.7"/></svg>
<svg style="left:929px;top:1044px" width="24" height="22" viewBox="0 0 24 22"><path d="M0 2 Q0 0 2 0 H8 L10 2 H22 Q24 2 24 4 V19 Q24 21 22 21 H2 Q0 21 0 19 Z" fill="#f5c038"/><rect x="0" y="5" width="24" height="16" rx="1.5" fill="#ffd34e"/><rect x="6" y="13" width="12" height="8" rx="1" fill="#1f6fd0"/></svg>
<div style="left:938px;top:1073px;width:6px;height:2px;background:#9a9a9a;border-radius:1px"></div>
<svg style="left:973px;top:1044px" width="24" height="24" viewBox="0 0 24 24"><defs><linearGradient id="eg" x1="0" y1="0" x2="1" y2="1"><stop offset="0" stop-color="#3ad0b0"/><stop offset="0.5" stop-color="#1a8ee0"/><stop offset="1" stop-color="#0a5cb8"/></linearGradient></defs><circle cx="12" cy="12" r="11.5" fill="url(#eg)"/><path d="M6 14 Q6 8 12 8 Q17 8 17 12 H9 Q9 17 14 17.5 Q18 17.5 21 15 Q19 21 12 21 Q6 20 6 14 Z" fill="#1b1d20" opacity="0.55"/></svg>
<svg style="left:1017px;top:1043px" width="24" height="25" viewBox="0 0 24 25"><path d="M8 6 Q8 1 12 1 Q16 1 16 6" fill="none" stroke="#4aa8f0" stroke-width="1.5"/><rect x="1" y="5" width="22" height="19" rx="2" fill="#f2f2f2"/><rect x="7" y="10" width="4.5" height="4.5" fill="#f25022"/><rect x="12.5" y="10" width="4.5" height="4.5" fill="#7fba00"/><rect x="7" y="15.5" width="4.5" height="4.5" fill="#00a4ef"/><rect x="12.5" y="15.5" width="4.5" height="4.5" fill="#ffb900"/></svg>
<svg style="left:1061px;top:1044px" width="24" height="24" viewBox="0 0 24 24"><path d="M12 1 A11 11 0 1 1 5.5 20.5 L1 23 L2.5 18 A11 11 0 0 1 12 1 Z" fill="#25d366"/><circle cx="12" cy="12" r="8" fill="none" stroke="#fff" stroke-width="1.8"/><path d="M8.5 8 Q8 11 11 14 Q13.5 16.5 16 15.5 L15 13.5 L13.5 14 Q11 12.5 10 10.5 L10.8 9.5 L9.8 7.5 Z" fill="#fff"/></svg>
<svg style="left:1105px;top:1044px" width="24" height="24" viewBox="0 0 24 24"><circle cx="12" cy="12" r="11.5" fill="#db4437"/><path d="M12 12 L2.2 6.5 A11.5 11.5 0 0 0 8 22.9 Z" fill="#0f9d58"/><path d="M12 12 L8 22.9 A11.5 11.5 0 0 0 23.5 12 L21.5 6.5 Z" fill="#ffcd40"/><path d="M12 7 H21.8 A11.5 11.5 0 0 0 2.2 6.5 Z" fill="#db4437"/><circle cx="12" cy="12" r="5.2" fill="#fff"/><circle cx="12" cy="12" r="4.2" fill="#1a73e8"/></svg>
<div style="left:1114px;top:1073px;width:6px;height:2px;background:#9a9a9a;border-radius:1px"></div>
<svg style="left:1149px;top:1044px" width="24" height="24" viewBox="0 0 24 24"><circle cx="12" cy="12" r="11.5" fill="#e8384f"/><path d="M7 18 L12 6 L17 18" fill="none" stroke="#fff" stroke-width="2.2"/></svg>
<svg style="left:1193px;top:1044px" width="24" height="24" viewBox="0 0 24 24"><rect x="0" y="0" width="24" height="24" rx="1" fill="#ef443b"/><path d="M4 12 L8.5 7.5 L13 12 L8.5 16.5 Z M11 12 L15.5 7.5 L20 12 L15.5 16.5 Z" fill="#fff"/><path d="M9.5 12 L12 9.5 L14.5 12 L12 14.5 Z" fill="#ef443b"/></svg>
<div style="left:1230px;top:1036px;width:38px;height:40px;background:rgba(255,255,255,0.06);border-radius:5px"></div>
<svg style="left:1237px;top:1044px" width="24" height="24" viewBox="0 0 24 24"><rect x="5" y="1" width="18" height="22" rx="2" fill="#107c41"/><rect x="5" y="1" width="18" height="7" rx="2" fill="#33c481"/><rect x="5" y="8" width="18" height="7" fill="#21a366"/><rect x="0" y="6" width="12" height="12" rx="1.5" fill="#0e6b38"/><path d="M3 9 L9 15 M9 9 L3 15" stroke="#fff" stroke-width="1.6"/></svg>
<div style="left:1242px;top:1073px;width:14px;height:3px;background:#60c0f8;border-radius:2px"></div>
<svg style="left:1281px;top:1043px" width="24" height="25" viewBox="0 0 24 25"><rect x="2" y="2" width="18" height="22" fill="#f0f0e0"/><rect x="2" y="16" width="18" height="8" fill="#8fc850"/><path d="M6 8 V14 M9 8 V14 M12 11 H17 M15 9 L17 11 L15 13" stroke="#333" stroke-width="1"/><path d="M17 1 L22 4" stroke="#a0a030" stroke-width="2"/></svg>
<div style="left:1290px;top:1073px;width:6px;height:2px;background:#9a9a9a;border-radius:1px"></div>
<svg style="left:1695px;top:1050px" width="13" height="8" viewBox="0 0 13 8" fill="none" stroke="#e8e8e8" stroke-width="1.4"><path d="M1 7 L6.5 1.5 L12 7"/></svg>
<svg style="left:1724px;top:1047px" width="20" height="16" viewBox="0 0 20 16"><path d="M4 14 Q0 14 0 10.5 Q0 7 4 7 Q5 2 10 2 Q15 2 16 7 Q20 7 20 10.5 Q20 14 16 14 Z" fill="#7a7a7a"/><path d="M3 1 L17 15" stroke="#e8e8e8" stroke-width="1.2"/></svg>
<svg style="left:1756px;top:1047px" width="18" height="17" viewBox="0 0 18 17" fill="none" stroke="#f0f0f0" stroke-width="1.2"><path d="M13 3 H1 V12 H13"/><path d="M7 12 V15 M4 15.5 H10"/><rect x="12.5" y="0.5" width="3" height="4"/><path d="M14 4.5 V16"/></svg>
<svg style="left:1781px;top:1047px" width="19" height="16" viewBox="0 0 19 16" fill="none" stroke="#f0f0f0" stroke-width="1.2"><path d="M1 5.5 H4 L8.5 1.5 V14.5 L4 10.5 H1 Z"/><path d="M11 5.5 Q12.5 8 11 10.5 M13.5 3.5 Q16 8 13.5 12.5 M16 1.5 Q19.5 8 16 14.5"/></svg>
<div class="t" style="left:1777px;top:1042px;font-size:12px;color:#f0f0f0;width:100px;text-align:right">11:40</div>
<div class="t" style="left:1777px;top:1058px;font-size:12px;color:#f0f0f0;width:100px;text-align:right">31/01/2026</div>
<svg style="left:1884px;top:1047px" width="16" height="17" viewBox="0 0 16 17" fill="none" stroke="#f0f0f0" stroke-width="1.2"><path d="M2 12 Q3 11 3 8 V6.5 Q3 1.5 8 1.5 Q13 1.5 13 6.5 V8 Q13 11 14 12 Z"/><path d="M6 14 Q8 16.5 10 14"/></svg>
</body></html>
